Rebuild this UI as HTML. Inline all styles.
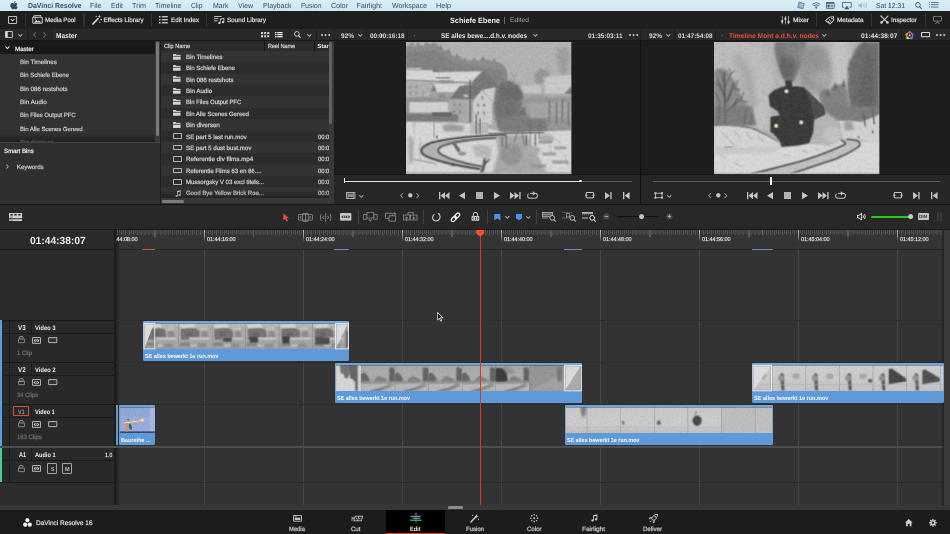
<!DOCTYPE html>
<html><head><meta charset="utf-8"><style>
*{box-sizing:border-box;margin:0;padding:0}
html,body{width:950px;height:534px;overflow:hidden;background:#282828;font-family:"Liberation Sans",sans-serif;color:#d8d8d8}
#o{position:absolute;left:0;top:0;width:1900px;height:1068px;transform:scale(.5);transform-origin:0 0;will-change:transform;overflow:hidden}
#i{position:absolute;left:0;top:0;width:950px;height:534px;transform:scale(2);transform-origin:0 0;overflow:hidden;background:#282828}
.a{position:absolute}
.t{position:absolute;white-space:nowrap;font-weight:bold;transform-origin:0 50%;text-rendering:geometricPrecision}
.sep{position:absolute;width:1px;background:#3e3e3e}
svg{position:absolute;overflow:visible}
</style></head><body>
<div id="o"><div id="i">
<div class="a" style="left:0px;top:0px;width:950px;height:11.2px;background:linear-gradient(180deg,#dceef7,#d1e7f2);"></div>
<svg style="left:10px;top:1px" width="8" height="9" viewBox="0 0 8 9"><path d="M5.6 0.1c.1.9-.7 1.8-1.6 1.8-.1-.9.7-1.700 1.6-1.800zM4 2.400c.5 0 1-.4 1.700-.4.600 0 1.300.300 1.700 1-1.300.800-1.100 2.600.300 3.100-.300.900-1.100 2.200-1.900 2.200-.600 0-.800-.350-1.500-.350s-1 .350-1.500.350C1.800 8.300.300 6.100.300 4.400.300 2.800 1.300 2 2.300 2c.700 0 1.200.400 1.700.400z" fill="#275068"/></svg>
<span class="t" style="left:27.50px;top:2.0px;font-size:7.20px;line-height:7.20px;color:#275068;transform:scaleX(0.9586);">DaVinci Resolve</span>
<span class="t" style="left:90.00px;top:2.0px;font-size:7.20px;line-height:7.20px;color:#275068;font-weight:normal;transform:scaleX(0.9919);">File</span>
<span class="t" style="left:110.50px;top:2.0px;font-size:7.20px;line-height:7.20px;color:#275068;font-weight:normal;transform:scaleX(0.9685);">Edit</span>
<span class="t" style="left:132.00px;top:2.0px;font-size:7.20px;line-height:7.20px;color:#275068;font-weight:normal;transform:scaleX(0.9922);">Trim</span>
<span class="t" style="left:155.00px;top:2.0px;font-size:7.20px;line-height:7.20px;color:#275068;font-weight:normal;transform:scaleX(0.9849);">Timeline</span>
<span class="t" style="left:191.00px;top:2.0px;font-size:7.20px;line-height:7.20px;color:#275068;font-weight:normal;transform:scaleX(0.9281);">Clip</span>
<span class="t" style="left:212.50px;top:2.0px;font-size:7.20px;line-height:7.20px;color:#275068;font-weight:normal;transform:scaleX(0.9697);">Mark</span>
<span class="t" style="left:237.50px;top:2.0px;font-size:7.20px;line-height:7.20px;color:#275068;font-weight:normal;transform:scaleX(0.9707);">View</span>
<span class="t" style="left:262.50px;top:2.0px;font-size:7.20px;line-height:7.20px;color:#275068;font-weight:normal;transform:scaleX(0.9770);">Playback</span>
<span class="t" style="left:300.50px;top:2.0px;font-size:7.20px;line-height:7.20px;color:#275068;font-weight:normal;transform:scaleX(0.9500);">Fusion</span>
<span class="t" style="left:331.00px;top:2.0px;font-size:7.20px;line-height:7.20px;color:#275068;font-weight:normal;transform:scaleX(0.9891);">Color</span>
<span class="t" style="left:356.50px;top:2.0px;font-size:7.20px;line-height:7.20px;color:#275068;font-weight:normal;">Fairlight</span>
<span class="t" style="left:391.50px;top:2.0px;font-size:7.20px;line-height:7.20px;color:#275068;font-weight:normal;transform:scaleX(0.9769);">Workspace</span>
<span class="t" style="left:435.50px;top:2.0px;font-size:7.20px;line-height:7.20px;color:#275068;font-weight:normal;transform:scaleX(1.0137);">Help</span>
<span class="t" style="left:875.50px;top:2.0px;font-size:7.20px;line-height:7.20px;color:#275068;font-weight:normal;transform:scaleX(0.9421);">Sat 12:31</span>
<div class="a" style="left:0px;top:11.2px;width:950px;height:17.4px;background:#1e1e1e;"></div>
<span class="t" style="left:45.00px;top:18.0px;font-size:6.30px;line-height:6.30px;color:#d8d8d8;font-weight:normal;-webkit-text-stroke:0.3px #d8d8d8;transform:scaleX(0.9678);">Media Pool</span>
<span class="t" style="left:103.50px;top:18.0px;font-size:6.30px;line-height:6.30px;color:#d8d8d8;font-weight:normal;-webkit-text-stroke:0.3px #d8d8d8;">Effects Library</span>
<span class="t" style="left:171.00px;top:18.0px;font-size:6.30px;line-height:6.30px;color:#d8d8d8;font-weight:normal;-webkit-text-stroke:0.3px #d8d8d8;">Edit Index</span>
<span class="t" style="left:226.50px;top:18.0px;font-size:6.30px;line-height:6.30px;color:#d8d8d8;font-weight:normal;-webkit-text-stroke:0.3px #d8d8d8;transform:scaleX(0.9944);">Sound Library</span>
<span class="t" style="left:793.00px;top:18.0px;font-size:6.30px;line-height:6.30px;color:#d8d8d8;font-weight:normal;-webkit-text-stroke:0.3px #d8d8d8;transform:scaleX(1.0385);">Mixer</span>
<span class="t" style="left:837.00px;top:18.0px;font-size:6.30px;line-height:6.30px;color:#d8d8d8;font-weight:normal;-webkit-text-stroke:0.3px #d8d8d8;transform:scaleX(1.0089);">Metadata</span>
<span class="t" style="left:891.00px;top:18.0px;font-size:6.30px;line-height:6.30px;color:#d8d8d8;font-weight:normal;-webkit-text-stroke:0.3px #d8d8d8;">Inspector</span>
<span class="t" style="left:449.50px;top:16.5px;font-size:7.60px;line-height:7.60px;color:#f2f2f2;transform:scaleX(0.9630);">Schiefe Ebene</span>
<span class="t" style="left:509.50px;top:18.0px;font-size:6.60px;line-height:6.60px;color:#a6a6a6;font-weight:normal;transform:scaleX(1.0159);">Edited</span>
<div class="a" style="left:24.5px;top:13px;width:1.3px;height:14px;background:#343434;"></div>
<div class="a" style="left:83.3px;top:13px;width:1.3px;height:14px;background:#343434;"></div>
<div class="a" style="left:151px;top:13px;width:1.3px;height:14px;background:#343434;"></div>
<div class="a" style="left:206px;top:13px;width:1.3px;height:14px;background:#343434;"></div>
<div class="a" style="left:816px;top:13px;width:1.3px;height:14px;background:#343434;"></div>
<div class="a" style="left:871px;top:13px;width:1.3px;height:14px;background:#343434;"></div>
<div class="a" style="left:925px;top:13px;width:1.3px;height:14px;background:#343434;"></div>
<div class="a" style="left:504px;top:17px;width:1px;height:7px;background:#6a6a6a;"></div>
<div class="a" style="left:0px;top:28.6px;width:950px;height:11.5px;background:#292929;"></div>
<div class="a" style="left:0px;top:40.1px;width:950px;height:1.2px;background:#161616;"></div>
<span class="t" style="left:56.20px;top:32.5px;font-size:7.00px;line-height:7.00px;color:#ededed;transform:scaleX(0.9345);">Master</span>
<span class="t" style="left:341.00px;top:33.5px;font-size:6.60px;line-height:6.60px;color:#dcdcdc;transform:scaleX(0.9846);">92%</span>
<span class="t" style="left:369.50px;top:33.5px;font-size:6.60px;line-height:6.60px;color:#dcdcdc;transform:scaleX(0.9600);">00:00:16:18</span>
<span class="t" style="left:441.00px;top:33.5px;font-size:6.80px;line-height:6.80px;color:#e6e6e6;transform:scaleX(0.9381);">SE alles bewe....d.h.v. nodes</span>
<span class="t" style="left:588.00px;top:33.5px;font-size:6.60px;line-height:6.60px;color:#dcdcdc;transform:scaleX(0.9701);">01:35:03:11</span>
<span class="t" style="left:649.00px;top:33.5px;font-size:6.60px;line-height:6.60px;color:#dcdcdc;transform:scaleX(0.9846);">92%</span>
<span class="t" style="left:677.50px;top:33.5px;font-size:6.60px;line-height:6.60px;color:#dcdcdc;transform:scaleX(0.9600);">01:47:54:08</span>
<span class="t" style="left:729.00px;top:33.5px;font-size:6.80px;line-height:6.80px;color:#e8503e;transform:scaleX(0.9753);">Timeline Mont a.d.h.v. nodes</span>
<span class="t" style="left:861.00px;top:33.5px;font-size:6.60px;line-height:6.60px;color:#e6e6e6;transform:scaleX(1.0157);">01:44:38:07</span>
<div class="a" style="left:27.6px;top:28.6px;width:24px;height:11.5px;background:#252525;"></div>
<div class="a" style="left:27.2px;top:28.6px;width:1px;height:11.5px;background:#1f1f1f;"></div>
<div class="a" style="left:51.2px;top:28.6px;width:1px;height:11.5px;background:#1f1f1f;"></div>
<div class="a" style="left:288.6px;top:28.6px;width:1px;height:11.5px;background:#1f1f1f;"></div>
<div class="a" style="left:316px;top:28.6px;width:1px;height:11.5px;background:#1f1f1f;"></div>
<div class="a" style="left:333.5px;top:28.6px;width:1px;height:11.5px;background:#1f1f1f;"></div>
<div class="a" style="left:366px;top:28.6px;width:1px;height:11.5px;background:#1f1f1f;"></div>
<div class="a" style="left:407.2px;top:28.6px;width:1px;height:11.5px;background:#1f1f1f;"></div>
<div class="a" style="left:640px;top:28.6px;width:1px;height:11.5px;background:#1f1f1f;"></div>
<div class="a" style="left:674px;top:28.6px;width:1px;height:11.5px;background:#1f1f1f;"></div>
<div class="a" style="left:715.2px;top:28.6px;width:1px;height:11.5px;background:#1f1f1f;"></div>
<div class="a" style="left:900.5px;top:28.6px;width:1px;height:11.5px;background:#1f1f1f;"></div>
<div class="a" style="left:0px;top:41px;width:156px;height:101px;background:#323232;"></div>
<div class="a" style="left:0px;top:41px;width:156px;height:13px;background:#191919;"></div>
<span class="t" style="left:14.70px;top:46.5px;font-size:6.20px;line-height:6.20px;color:#e8e8e8;font-weight:normal;-webkit-text-stroke:0.3px #e8e8e8;transform:scaleX(0.9883);">Master</span>
<span class="t" style="left:20.30px;top:60.0px;font-size:6.10px;line-height:6.10px;color:#c6c6c6;font-weight:normal;-webkit-text-stroke:0.3px #c6c6c6;transform:scaleX(1.0152);">Bin Timelines</span>
<span class="t" style="left:20.30px;top:73.0px;font-size:6.10px;line-height:6.10px;color:#c6c6c6;font-weight:normal;-webkit-text-stroke:0.3px #c6c6c6;transform:scaleX(0.9753);">Bin Schiefe Ebene</span>
<span class="t" style="left:20.30px;top:86.5px;font-size:6.10px;line-height:6.10px;color:#c6c6c6;font-weight:normal;-webkit-text-stroke:0.3px #c6c6c6;transform:scaleX(1.0107);">Bin 086 restshots</span>
<span class="t" style="left:20.30px;top:100.0px;font-size:6.10px;line-height:6.10px;color:#c6c6c6;font-weight:normal;-webkit-text-stroke:0.3px #c6c6c6;transform:scaleX(1.0408);">Bin Audio</span>
<span class="t" style="left:20.30px;top:113.0px;font-size:6.10px;line-height:6.10px;color:#c6c6c6;font-weight:normal;-webkit-text-stroke:0.3px #c6c6c6;transform:scaleX(0.9732);">Bin Files Output PFC</span>
<span class="t" style="left:20.30px;top:126.5px;font-size:6.10px;line-height:6.10px;color:#c6c6c6;font-weight:normal;-webkit-text-stroke:0.3px #c6c6c6;transform:scaleX(0.9740);">Bin Alle Scenes Gereed</span>
<div class="a" style="left:0;top:136px;width:156px;height:6px;overflow:hidden"><span class="t" style="left:20.30px;top:3.5px;font-size:6.10px;line-height:6.10px;color:#8a8a8a;transform:scaleX(0.9240);">Bin diversen</span></div>
<div class="a" style="left:0px;top:133px;width:155px;height:9px;background:linear-gradient(180deg,rgba(0,0,0,0),rgba(0,0,0,.38));"></div>
<div class="a" style="left:155px;top:41px;width:5.3px;height:101px;background:#3a3a3a;"></div>
<div class="a" style="left:156px;top:41.5px;width:3.4px;height:94px;background:#7a7a7a;border-radius:1.7px"></div>
<div class="a" style="left:0px;top:142px;width:160.5px;height:62px;background:#2f2f2f;"></div>
<div class="a" style="left:0px;top:141.8px;width:160.3px;height:0.9px;background:#454545;"></div>
<div class="a" style="left:160.3px;top:41px;width:1px;height:163px;background:#1e1e1e;"></div>
<span class="t" style="left:4.00px;top:149.0px;font-size:6.20px;line-height:6.20px;color:#e8e8e8;font-weight:normal;-webkit-text-stroke:0.3px #e8e8e8;transform:scaleX(0.9846);">Smart Bins</span>
<span class="t" style="left:16.90px;top:164.5px;font-size:6.10px;line-height:6.10px;color:#c6c6c6;font-weight:normal;-webkit-text-stroke:0.3px #c6c6c6;">Keywords</span>
<div class="a" style="left:160.5px;top:41px;width:172px;height:163px;background:#262626;"></div>
<div class="a" style="left:160.5px;top:41px;width:169px;height:10px;background:#2a2a2a;"></div>
<span class="t" style="left:163.60px;top:44.5px;font-size:5.90px;line-height:5.90px;color:#d0d0d0;font-weight:normal;-webkit-text-stroke:0.3px #d0d0d0;transform:scaleX(0.9491);">Clip Name</span>
<span class="t" style="left:267.80px;top:44.5px;font-size:5.90px;line-height:5.90px;color:#d0d0d0;font-weight:normal;-webkit-text-stroke:0.3px #d0d0d0;transform:scaleX(0.9196);">Reel Name</span>
<span class="t" style="left:317.40px;top:44.5px;font-size:5.90px;line-height:5.90px;color:#f4f4f4;">Star</span>
<div class="a" style="left:264px;top:41px;width:1px;height:10px;background:#161616;"></div>
<div class="a" style="left:314px;top:41px;width:1px;height:10px;background:#161616;"></div>
<div class="a" style="left:160.5px;top:51px;width:169px;height:11.37px;background:#333333;"></div>
<span class="t" style="left:185.70px;top:54.5px;font-size:6.10px;line-height:6.10px;color:#cccccc;font-weight:normal;-webkit-text-stroke:0.3px #cccccc;transform:scaleX(1.0097);">Bin Timelines</span>
<svg style="left:173.4px;top:53.60px" width="7.6" height="5.8" viewBox="0 0 7.6 5.8"><path d="M0 .6Q0 0 .6 0H2.800L3.500.900H7Q7.600.900 7.600 1.500V5.200Q7.600 5.800 7 5.800H.6Q0 5.800 0 5.200Z" fill="#d4d4d4"/><rect x="0" y="1.900" width="7.600" height=".7" fill="#2c2c2c"/></svg>
<div class="a" style="left:160.5px;top:62.37px;width:169px;height:11.37px;background:#2c2c2c;"></div>
<span class="t" style="left:185.70px;top:66.0px;font-size:6.10px;line-height:6.10px;color:#cccccc;font-weight:normal;-webkit-text-stroke:0.3px #cccccc;transform:scaleX(0.9753);">Bin Schiefe Ebene</span>
<svg style="left:173.4px;top:64.97px" width="7.6" height="5.8" viewBox="0 0 7.6 5.8"><path d="M0 .6Q0 0 .6 0H2.800L3.500.900H7Q7.600.900 7.600 1.500V5.200Q7.600 5.800 7 5.800H.6Q0 5.800 0 5.200Z" fill="#d4d4d4"/><rect x="0" y="1.900" width="7.600" height=".7" fill="#2c2c2c"/></svg>
<div class="a" style="left:160.5px;top:73.74px;width:169px;height:11.37px;background:#333333;"></div>
<span class="t" style="left:185.70px;top:77.5px;font-size:6.10px;line-height:6.10px;color:#cccccc;font-weight:normal;-webkit-text-stroke:0.3px #cccccc;transform:scaleX(1.0065);">Bin 086 restshots</span>
<svg style="left:173.4px;top:76.34px" width="7.6" height="5.8" viewBox="0 0 7.6 5.8"><path d="M0 .6Q0 0 .6 0H2.800L3.500.900H7Q7.600.900 7.600 1.500V5.200Q7.600 5.800 7 5.800H.6Q0 5.800 0 5.200Z" fill="#d4d4d4"/><rect x="0" y="1.900" width="7.600" height=".7" fill="#2c2c2c"/></svg>
<div class="a" style="left:160.5px;top:85.11px;width:169px;height:11.37px;background:#2c2c2c;"></div>
<span class="t" style="left:185.70px;top:89.0px;font-size:6.10px;line-height:6.10px;color:#cccccc;font-weight:normal;-webkit-text-stroke:0.3px #cccccc;transform:scaleX(1.0175);">Bin Audio</span>
<svg style="left:173.4px;top:87.71px" width="7.6" height="5.8" viewBox="0 0 7.6 5.8"><path d="M0 .6Q0 0 .6 0H2.800L3.500.900H7Q7.600.900 7.600 1.500V5.200Q7.600 5.800 7 5.800H.6Q0 5.800 0 5.200Z" fill="#d4d4d4"/><rect x="0" y="1.900" width="7.600" height=".7" fill="#2c2c2c"/></svg>
<div class="a" style="left:160.5px;top:96.48px;width:169px;height:11.37px;background:#333333;"></div>
<span class="t" style="left:185.70px;top:100.0px;font-size:6.10px;line-height:6.10px;color:#cccccc;font-weight:normal;-webkit-text-stroke:0.3px #cccccc;transform:scaleX(0.9645);">Bin Files Output PFC</span>
<svg style="left:173.4px;top:99.08px" width="7.6" height="5.8" viewBox="0 0 7.6 5.8"><path d="M0 .6Q0 0 .6 0H2.800L3.500.900H7Q7.600.900 7.600 1.500V5.200Q7.600 5.800 7 5.800H.6Q0 5.800 0 5.200Z" fill="#d4d4d4"/><rect x="0" y="1.900" width="7.600" height=".7" fill="#2c2c2c"/></svg>
<div class="a" style="left:160.5px;top:107.85px;width:169px;height:11.37px;background:#2c2c2c;"></div>
<span class="t" style="left:185.70px;top:111.5px;font-size:6.10px;line-height:6.10px;color:#cccccc;font-weight:normal;-webkit-text-stroke:0.3px #cccccc;transform:scaleX(0.9771);">Bin Alle Scenes Gereed</span>
<svg style="left:173.4px;top:110.45px" width="7.6" height="5.8" viewBox="0 0 7.6 5.8"><path d="M0 .6Q0 0 .6 0H2.800L3.500.900H7Q7.600.900 7.600 1.500V5.200Q7.600 5.800 7 5.800H.6Q0 5.800 0 5.200Z" fill="#d4d4d4"/><rect x="0" y="1.900" width="7.600" height=".7" fill="#2c2c2c"/></svg>
<div class="a" style="left:160.5px;top:119.22px;width:169px;height:11.37px;background:#333333;"></div>
<span class="t" style="left:185.70px;top:123.0px;font-size:6.10px;line-height:6.10px;color:#cccccc;font-weight:normal;-webkit-text-stroke:0.3px #cccccc;transform:scaleX(1.0075);">Bin diversen</span>
<svg style="left:173.4px;top:121.82px" width="7.6" height="5.8" viewBox="0 0 7.6 5.8"><path d="M0 .6Q0 0 .6 0H2.800L3.500.900H7Q7.600.900 7.600 1.500V5.200Q7.600 5.800 7 5.800H.6Q0 5.800 0 5.200Z" fill="#d4d4d4"/><rect x="0" y="1.900" width="7.600" height=".7" fill="#2c2c2c"/></svg>
<div class="a" style="left:160.5px;top:130.59px;width:169px;height:11.37px;background:#2c2c2c;"></div>
<span class="t" style="left:185.70px;top:134.5px;font-size:6.10px;line-height:6.10px;color:#cccccc;font-weight:normal;-webkit-text-stroke:0.3px #cccccc;transform:scaleX(1.0067);">SE part 5 last run.mov</span>
<div class="a" style="left:173.4px;top:133.49px;width:8.6px;height:5.6px;border:1px solid #b4b4b4;border-radius:.8px"></div>
<span class="t" style="left:318.00px;top:134.5px;font-size:6.10px;line-height:6.10px;color:#cccccc;font-weight:normal;-webkit-text-stroke:0.3px #cccccc;transform:scaleX(0.9508);">00:00</span>
<div class="a" style="left:160.5px;top:141.96px;width:169px;height:11.37px;background:#333333;"></div>
<span class="t" style="left:185.70px;top:145.5px;font-size:6.10px;line-height:6.10px;color:#cccccc;font-weight:normal;-webkit-text-stroke:0.3px #cccccc;transform:scaleX(1.0054);">SE part 5 dust bust.mov</span>
<div class="a" style="left:173.4px;top:144.86px;width:8.6px;height:5.6px;border:1px solid #b4b4b4;border-radius:.8px"></div>
<span class="t" style="left:318.00px;top:145.5px;font-size:6.10px;line-height:6.10px;color:#cccccc;font-weight:normal;-webkit-text-stroke:0.3px #cccccc;transform:scaleX(0.9508);">00:00</span>
<div class="a" style="left:160.5px;top:153.33px;width:169px;height:11.37px;background:#2c2c2c;"></div>
<span class="t" style="left:185.70px;top:157.0px;font-size:6.10px;line-height:6.10px;color:#cccccc;font-weight:normal;-webkit-text-stroke:0.3px #cccccc;transform:scaleX(1.0294);">Referentie div films.mp4</span>
<div class="a" style="left:173.4px;top:156.23px;width:8.6px;height:5.6px;border:1px solid #b4b4b4;border-radius:.8px"></div>
<span class="t" style="left:318.00px;top:157.0px;font-size:6.10px;line-height:6.10px;color:#cccccc;font-weight:normal;-webkit-text-stroke:0.3px #cccccc;transform:scaleX(0.9508);">00:00</span>
<div class="a" style="left:160.5px;top:164.7px;width:169px;height:11.37px;background:#333333;"></div>
<span class="t" style="left:185.70px;top:168.5px;font-size:6.10px;line-height:6.10px;color:#cccccc;font-weight:normal;-webkit-text-stroke:0.3px #cccccc;transform:scaleX(0.9863);">Referentie Films 63 en 86....</span>
<div class="a" style="left:173.4px;top:167.60px;width:8.6px;height:5.6px;border:1px solid #b4b4b4;border-radius:.8px"></div>
<span class="t" style="left:318.00px;top:168.5px;font-size:6.10px;line-height:6.10px;color:#cccccc;font-weight:normal;-webkit-text-stroke:0.3px #cccccc;transform:scaleX(0.9508);">00:00</span>
<div class="a" style="left:160.5px;top:176.07px;width:169px;height:11.37px;background:#2c2c2c;"></div>
<span class="t" style="left:185.70px;top:180.0px;font-size:6.10px;line-height:6.10px;color:#cccccc;font-weight:normal;-webkit-text-stroke:0.3px #cccccc;transform:scaleX(0.9914);">Mussorgsky V 03 excl titels...</span>
<div class="a" style="left:173.4px;top:178.97px;width:8.6px;height:5.6px;border:1px solid #b4b4b4;border-radius:.8px"></div>
<span class="t" style="left:318.00px;top:180.0px;font-size:6.10px;line-height:6.10px;color:#cccccc;font-weight:normal;-webkit-text-stroke:0.3px #cccccc;transform:scaleX(0.9508);">00:00</span>
<div class="a" style="left:160.5px;top:187.44px;width:169px;height:11.37px;background:#333333;"></div>
<span class="t" style="left:185.70px;top:191.0px;font-size:6.10px;line-height:6.10px;color:#cccccc;font-weight:normal;-webkit-text-stroke:0.3px #cccccc;transform:scaleX(0.9828);">Good Bye Yellow Brick Roa...</span>
<svg style="left:174.5px;top:189.64px" width="6" height="7" viewBox="0 0 6 7"><path d="M2 1.200L5.600.300V5.100A1.100 1 0 1 1 4.900 4.200V1.700L2.700 2.250V6A1.100 1 0 1 1 2 5.100Z" fill="#d4d4d4"/></svg>
<span class="t" style="left:318.00px;top:191.0px;font-size:6.10px;line-height:6.10px;color:#cccccc;font-weight:normal;-webkit-text-stroke:0.3px #cccccc;transform:scaleX(0.9508);">00:00</span>
<div class="a" style="left:161.3px;top:198.3px;width:173px;height:5.6px;background:#383838;"></div>
<div class="a" style="left:161.3px;top:190px;width:167.5px;height:8.3px;background:linear-gradient(180deg,rgba(0,0,0,0),rgba(0,0,0,.3));"></div>
<div class="a" style="left:161.7px;top:199.7px;width:22.3px;height:3px;background:#7c7c7c;border-radius:1.5px"></div>
<div class="a" style="left:328.8px;top:41px;width:5.4px;height:163px;background:#383838;"></div>
<div class="a" style="left:329.4px;top:41.5px;width:2.9px;height:82px;background:#626262;border-radius:1.4px"></div>
<div class="a" style="left:334px;top:41px;width:0.8px;height:163px;background:#1c1c1c;"></div>
<div class="a" style="left:334px;top:41px;width:616px;height:133px;background:#1d1d1d;"></div>
<div class="a" style="left:334px;top:173.9px;width:616px;height:1px;background:#141414;"></div>
<div class="a" style="left:334px;top:174.8px;width:616px;height:29px;background:#262626;"></div>
<div class="a" style="left:640px;top:41px;width:1px;height:163px;background:#111111;"></div>
<div class="a" style="left:0px;top:203.6px;width:950px;height:1.8px;background:#131313;"></div>
<svg style="left:405.8px;top:41.8px" width="165.4" height="132.1" viewBox="0 0 165 131.500" preserveAspectRatio="none"><clipPath id="cl"><rect width="165" height="131.500"/></clipPath><g clip-path="url(#cl)"><rect width="165" height="131.500" fill="#aeaeae"/><rect y="40" width="165" height="50" fill="#a2a2a2" filter="url(#b3)"/><path d="M0 4L4 3 8 5 12 2 17 4 21 1 26 3 30 1 34 5 38 9 42 8 46 13 50 15 54 14 58 19 64 18 70 19 76 17 84 18 92 20 98 23 101 30 101 40 0 40Z" fill="#828282" filter="url(#b1)"/><path d="M0 10L30 8 44 18 60 24 98 28 100 40 0 40Z" fill="#767676" filter="url(#b2)"/><path d="M150 8Q156 2 162 8L164 20 160 33H154L150 20Z" fill="#9b9b9b" filter="url(#b2)"/><path d="M128 32Q134 24 142 30L146 40 142 52H132Z" fill="#8e8e8e" filter="url(#b2)"/><path d="M136.800 34.300L165 33V46L158 51.500 137 52Z" fill="#c6c6c6" filter="url(#b1)"/><path d="M158 51.500L165 44V53Z" fill="#6e6e6e" filter="url(#b1)"/><rect x="137" y="52" width="28" height="22" fill="#aaaaaa" filter="url(#b1)"/><path d="M140 54V74M146 56V74M152 54V74M158 56V74" stroke="#7a7a7a" stroke-width="1.400" filter="url(#b1)"/><path d="M114 43L136 42V52L118 52Z" fill="#c2c2c2" filter="url(#b2)"/><path d="M118 52H138V70H118Z" fill="#9a9a9a" filter="url(#b2)"/><path d="M0 28L28 28 31 30 76 29 66 40 0 37.500Z" fill="#d6d6d6" filter="url(#b1)"/><path d="M0 26L14 25.500 16 28H0Z" fill="#bdbdbd" filter="url(#b1)"/><path d="M26 27L31 27 32 30H27Z" fill="#6a6a6a" filter="url(#b1)"/><path d="M30 35H44V36.400H30Z" fill="#707070" filter="url(#b1)"/><path d="M0 38L32 40V54L0 55Z" fill="#acacac" filter="url(#b1)"/><path d="M3 43H5.500V46H3ZM9 43H11.500V46H9ZM3 49H5.500V52H3ZM9 49H11.500V52H9ZM16 49H18V52H16Z" fill="#8c8c8c" filter="url(#b1)"/><rect x="33" y="38" width="14" height="3" fill="#888" filter="url(#b1)"/><path d="M66 40L77.500 28.500 91 40V52H66Z" fill="#6b6b6b" filter="url(#b1)"/><path d="M27.600 41.400H60L51 50H24Z" fill="#d6d6d6" filter="url(#b1)"/><path d="M24 50L27.600 41.400 31 50Z" fill="#707070" filter="url(#b1)"/><path d="M24 50H46V57H24Z" fill="#9a9a9a" filter="url(#b1)"/><rect x="33" y="52" width="6" height="4" fill="#7e7e7e" filter="url(#b1)"/><path d="M43 57L54 43.500 66 43 74 47 67 59Z" fill="#6a6a6a" filter="url(#b1)"/><path d="M57 52L62 52.500 62 55 58 55Z" fill="#bdbdbd" filter="url(#b1)"/><path d="M43 57H67V80H43Z" fill="#a2a2a2" filter="url(#b1)"/><path d="M47 61H49V64H47ZM53 61H55V64H53ZM47 68H49V71H47ZM53 68H55V71H53Z" fill="#7c7c7c" filter="url(#b1)"/><path d="M67 59L76 47.500 86 60V82H67Z" fill="#cacaca" filter="url(#b1)"/><path d="M76 47.500L90 45 98 56 87 60Z" fill="#cacaca" filter="url(#b1)"/><path d="M71 61H73V64.500H71ZM77 61H79V64.500H77ZM71 69H73V72.500H71ZM77 69H79V72.500H77ZM75 54H77V57H75Z" fill="#858585" filter="url(#b1)"/><path d="M0 55H43V60H0Z" fill="#8a8a8a" filter="url(#b1)"/><path d="M3 60H42V70H3Z" fill="#d0d0d0" filter="url(#b1)"/><path d="M0 58H3V82H0Z" fill="#8a8a8a" filter="url(#b1)"/><path d="M0 71L52 72V79L0 79Z" fill="#6e6e6e" filter="url(#b1)"/><path d="M26 70H46V74H26Z" fill="#555" filter="url(#b1)"/><rect x="63.200" y="37.500" width="1.500" height="55" fill="#4f4f4f" filter="url(#b1)"/><path d="M59 34L63.500 38" stroke="#c8c8c8" stroke-width="1" filter="url(#b1)"/><path d="M90 42Q98 36 107 40Q117 46 117 56Q118 70 113 84L92 86Q86 70 88 56Z" fill="#6c6c6c" filter="url(#b2)"/><ellipse cx="101" cy="62" rx="10" ry="16" fill="#646464" filter="url(#b2)"/><path d="M116 56L165 54V90H114Z" fill="#8c8c8c" filter="url(#b2)"/><path d="M95 74H141V90H92Z" fill="#707070" filter="url(#b2)"/><path d="M120 60H165V76H124Z" fill="#9c9c9c" filter="url(#b2)"/><path d="M143 58V80M150 60V82M156 58V80M162 60V84" stroke="#6a6a6a" stroke-width="1.600" filter="url(#b1)"/><path d="M0 79.500L64 81 100 91 165 88V131.500H0Z" fill="#d5d5d5" filter="url(#b1)"/><path d="M36 83Q46 80 58 84L57 89 38 89Z" fill="#959595" filter="url(#b2)"/><path d="M64 80H82V91H64Z" fill="#b4b4b4" filter="url(#b1)"/><path d="M70 72V92M74 76V92" stroke="#4a4a4a" stroke-width="1.200" filter="url(#b1)"/><rect x="27.500" y="78" width=".9" height="18" fill="#7a7a7a" filter="url(#b1)"/><rect x="30" y="93" width="1.600" height="3" fill="#444" filter="url(#b1)"/><path d="M82 91.500L138 90" stroke="#505050" stroke-width="1.500" filter="url(#b1)"/><path d="M90 94L120 92 132 114 141 131.500H86L92 110Z" fill="#a2a2a2" filter="url(#b2)"/><ellipse cx="105" cy="112" rx="11" ry="11" fill="#8a8a8a" filter="url(#b2)"/><path d="M96 94V104M100 93V106M120 93V103M129 92V104" stroke="#555" stroke-width="1.300" filter="url(#b1)"/><ellipse cx="140" cy="96" rx="8" ry="4" fill="#a8a8a8" filter="url(#b2)"/><ellipse cx="128" cy="108" rx="6" ry="4" fill="#a6a6a6" filter="url(#b2)"/><path d="M86 93.500Q50 95 26 100.500Q12 106 18 112Q30 119 72 126L74 123.500Q44 117 38 112Q30 108 36 104Q50 99 86 96Z" fill="#adadad" filter="url(#b1)"/><path d="M100 92.500Q50 94 25 100.500Q10 106 18 112.500Q32 120 74 126.500" fill="none" stroke="#3c3c3c" stroke-width="2.400" filter="url(#b1)"/><path d="M98 93.600Q52 95 27.500 101.500Q14 106.500 21 111.800Q34 118.500 74 125" fill="none" stroke="#b0b0b0" stroke-width=".8"/><path d="M90 95.500Q52 97.500 36 103.500Q28 108 36 112.500Q48 119 76 124" fill="none" stroke="#474747" stroke-width="1.800" filter="url(#b1)"/><path d="M46 100.500L49 100 54.500 108 52 110Z" fill="#505050" filter="url(#b1)"/><ellipse cx="56" cy="111" rx="4" ry="2" fill="#8a8a8a" filter="url(#b1)"/><path d="M77 116L80 115 79.500 119 83 116 84 117.500 79.500 122 77 131.500H73.500L76.500 121Z" fill="#505050" filter="url(#b1)"/><path d="M66 104Q76 100 86 106L84 116 70 114Z" fill="#b2b2b2" filter="url(#b2)"/><path d="M2 96Q6 90 8 100L7 120 3 122Z" fill="#a8a8a8" filter="url(#b2)"/><rect x="45" y="121" width="3.600" height="2.400" fill="#444" filter="url(#b1)"/><path d="M8 117L30 121" stroke="#8e8e8e" stroke-width="1.200" filter="url(#b1)"/><rect x="0" y="129.500" width="165" height="2" fill="#a6a6a6" filter="url(#b1)"/><g fill="none" stroke="#8a8a8a" stroke-width=".7" filter="url(#b1)" opacity=".9"><path d="M157 33V12M157 22L152 12M157 20L162 10M157 16L154 8M157 14L160 5M152 16L149 12M162 16L164 12"/><path d="M138 52V30M138 40L132 30M138 38L144 28M138 34L134 26M138 32L142 24M133 36L130 32"/><path d="M108 40V32M108 36L105 31M108 35L111 30"/></g><g fill="none" stroke="#5a5a5a" stroke-width=".8" filter="url(#b1)"><path d="M124 78V100M133 76V96M124 86L120 80M133 84L137 78M112 86L108 100M116 88L118 104"/></g><g fill="#5c5c5c" filter="url(#b1)" opacity=".8"><path d="M92 48L96 40 99 46 103 38 107 45 111 42 114 50 117 56 112 58 96 56Z"/><path d="M88 70L92 62 95 68H88Z"/><path d="M112 72L118 64 120 74Z"/></g><g fill="#777" filter="url(#b1)"><path d="M4 3L6 0 8 4ZM10 2.500L12.500 0 14 3ZM18 2L20.500 0 22 2.500ZM25 2L27.500 0 30 3ZM33 6L35 2 37 8ZM41 9L43 6 45 12ZM49 15L51 11 53 16ZM57 19L58.500 15 61 19ZM66 19L68 15 70 19ZM75 18L77 14 79 18ZM86 19L88 16 90 20Z"/></g><g fill="none" stroke="#9a9a9a" stroke-width=".6" filter="url(#b1)"><path d="M8 78V92M6 84L10 80M14 96V118M12 104L17 100M150 96L156 106M142 100L146 112M158 112L162 124M120 118L128 126M100 120L96 130"/></g><g fill="#8a8a8a" filter="url(#b1)" opacity=".8"><path d="M132 98H146V101H132ZM148 104H160V107H148ZM136 110H150V113H136ZM146 118H162V121H146ZM126 122H140V125H126Z"/></g><rect width="165" height="131.500" filter="url(#gr)" opacity=".07"/><rect width="165" height="131.500" filter="url(#gr2)" opacity=".06"/></g></svg>
<svg style="left:713.8px;top:41.8px" width="165.4" height="132.1" viewBox="0 0 165 131.500" preserveAspectRatio="none"><clipPath id="cr"><rect width="165" height="131.500"/></clipPath><g clip-path="url(#cr)"><rect width="165" height="131.500" fill="#adadad"/><ellipse cx="22" cy="14" rx="34" ry="20" fill="#b7b7b7" filter="url(#b5)"/><ellipse cx="126" cy="20" rx="11" ry="28" fill="#c0c0c0" filter="url(#b3)"/><ellipse cx="100" cy="26" rx="17" ry="24" fill="#909090" filter="url(#b3)"/><ellipse cx="108" cy="36" rx="8" ry="8" fill="#a2a2a2" filter="url(#b3)"/><path d="M24 10Q40 30 46 64L36 66Q34 36 18 18Z" fill="#a2a2a2" filter="url(#b3)"/><ellipse cx="50" cy="44" rx="10" ry="24" fill="#bababa" filter="url(#b3)"/><ellipse cx="47" cy="76" rx="9" ry="14" fill="#bebebe" filter="url(#b3)"/><path d="M71 39Q62 24 60 6L62 0H92Q90 18 80 39Z" fill="#6c6c6c" filter="url(#b2)"/><ellipse cx="73" cy="22" rx="7.500" ry="15" fill="#585858" filter="url(#b2)"/><ellipse cx="80" cy="8" rx="12" ry="9" fill="#787878" filter="url(#b3)"/><ellipse cx="98" cy="16" rx="12" ry="12" fill="#8a8a8a" filter="url(#b3)"/><path d="M0 30Q4 24 8 27Q14 26 18 36Q24 42 26 52Q32 60 36 70L42 82H0Z" fill="#808080" filter="url(#b2)"/><path d="M10 30L12 82M4 40L11 56M20 40L13 60M24 56L16 70M30 66L22 82" stroke="#4e4e4e" stroke-width="1.600" fill="none" filter="url(#b1)"/><path d="M0 64H38L42 83H0Z" fill="#6f6f6f" filter="url(#b2)"/><path d="M148 0H165V74L150 78 138 74Q132 50 134 34Q132 22 138 14Q142 4 148 0Z" fill="#626262" filter="url(#b2)"/><path d="M152 6Q160 10 160 30Q162 50 158 70L146 72Q140 40 152 6Z" fill="#545454" filter="url(#b3)"/><path d="M105 50Q110 44 116 48Q120 40 125 43Q129 38 133 50L136 78H108Z" fill="#777777" filter="url(#b2)"/><path d="M109 64H165V72L147 80 125 77Z" fill="#6f6f6f" filter="url(#b2)"/><path d="M125 78.400L147.500 79.700 165 72V102L146 97 128 97Z" fill="#cfcfcf" filter="url(#b1)"/><path d="M149 70L151 84M158 66L160 82" stroke="#505050" stroke-width="1.400" filter="url(#b1)"/><path d="M130 80Q134 76 138 80L140 88H130Z" fill="#9a9a9a" filter="url(#b2)"/><path d="M0 102L66 103 96 101 128 97 165 100V131.500H0Z" fill="#d7d7d7" filter="url(#b1)"/><path d="M0 104L70 104 60 110 0 112Z" fill="#c6c6c6" filter="url(#b2)"/><path d="M0 83.700L16 83 37 86.300 54 94 63.500 99.400 66 103.500 10 104.600 0 102Z" fill="#d2d2d2" filter="url(#b1)"/><path d="M0 83Q18 81 38 85.500L52 92" fill="none" stroke="#707070" stroke-width="1.700" filter="url(#b1)"/><path d="M10 104.300L19 104.600" stroke="#505050" stroke-width="1.100" filter="url(#b1)"/><path d="M52 92L64 99" stroke="#7a7a7a" stroke-width="1.400" filter="url(#b1)"/><path d="M99 72L112 70 125 79.700 127 96.800 115 103.500 96 101Z" fill="#b0b0b0" filter="url(#b2)"/><ellipse cx="118" cy="92" rx="9" ry="8" fill="#c0c0c0" filter="url(#b2)"/><path d="M37 131.500L84 119Q110 111.500 130.500 102Q132 99.500 126.600 97.800L132 97Q142 98 146 102Q144 106 121 116.500L84 129.600 78 131.500Z" fill="#bebebe" filter="url(#b1)"/><path d="M37 131.500L84 119.500Q112 111 130.500 102Q132.500 99.600 126.600 97.800" fill="none" stroke="#3c3c3c" stroke-width="1.700" filter="url(#b1)"/><path d="M76 131.500L121.300 116.400Q140 108 145 103.500Q147 100 142 98.300Q138 97 132 97" fill="none" stroke="#404040" stroke-width="1.700" filter="url(#b1)"/><path d="M54.400 52.800L60.400 47.700 66.800 45 71.200 44 71.200 38.200 78 38.200 78 44 84 44 89.600 45 98.500 54 108.700 64 110.800 72 100 77 99 90 95 100.700 84 103 67.500 104.600 66 99.400 60 92 56.300 89.500 56.300 74.500 65.500 73 63.500 69 55.700 64Z" fill="#282828" filter="url(#b1)"/><path d="M89.600 45L98.500 54 108.700 64 110.800 72 100 77 96 58Z" fill="#3c3c3c" filter="url(#b1)"/><path d="M58 74.500H96V77H58Z" fill="#222222" filter="url(#b1)"/><circle cx="72.300" cy="49" r="1.900" fill="#f6f2c8" filter="url(#b1)"/><circle cx="62" cy="83.400" r="1.900" fill="#f6f2c8" filter="url(#b1)"/><circle cx="87" cy="80" r="1.900" fill="#f6f2c8" filter="url(#b1)"/><rect x="0" y="130" width="165" height="1.500" fill="#b0b0b0" filter="url(#b1)"/><g fill="none" stroke="#4a4a4a" stroke-width=".8" filter="url(#b1)"><path d="M11 82L10 30M10 50L3 36M10 46L17 32M10 40L6 28M10.500 60L20 46M20 46L24 38M20 46L26 48M11 70L26 58M26 58L30 50M26 58L34 60M4 82L6 60M6 60L1 50M30 82L32 66M36 82L38 72M3 44L0 40M17 32L15 26M17 32L21 28"/></g><g fill="#5a5a5a" filter="url(#b1)" opacity=".85"><path d="M146 6L150 0H153L149 10ZM140 16L146 8 147 18ZM136 28L142 18 144 30ZM134 42L140 32 142 44ZM136 56L141 46 143 58Z"/><path d="M118 48L121 40 124 48ZM127 44L129.500 37 132 45ZM110 54L113 47 116 54Z"/></g><g fill="none" stroke="#9a9a9a" stroke-width=".7" filter="url(#b1)"><path d="M8 90L14 96M20 88L26 95M32 90L38 97M44 94L50 100M16 98L20 103M70 112L76 114M88 108L94 110M100 106L104 108M20 120L28 124M6 112L12 116"/></g><rect x="143.500" y="93.800" width="1.600" height="1.600" fill="#333" filter="url(#b1)"/><rect x="157.500" y="88" width="1.500" height="3" fill="#444" filter="url(#b1)"/><rect width="165" height="131.500" filter="url(#gr)" opacity=".07"/><rect width="165" height="131.500" filter="url(#gr2)" opacity=".06"/></g></svg>
<div class="a" style="left:344px;top:180.6px;width:236px;height:1px;background:#e0e0e0;"></div>
<div class="a" style="left:580px;top:180.6px;width:52px;height:1px;background:#5a5a5a;"></div>
<div class="a" style="left:343.6px;top:178.4px;width:1.2px;height:5px;background:#f0f0f0;"></div>
<div class="a" style="left:579px;top:179.6px;width:2.6px;height:2.6px;background:#f0f0f0;border-radius:50%"></div>
<div class="a" style="left:653px;top:180.6px;width:287px;height:1px;background:#5a5a5a;"></div>
<div class="a" style="left:770.3px;top:177.2px;width:1.6px;height:7.4px;background:#f4f4f4;"></div>
<svg style="left:346.00px;top:192.20px" width="9.40" height="6.90" viewBox="0 0 9.40 6.90"><rect x=".45" y=".45" width="8.500" height="6" rx=".6" fill="none" stroke="#c4c4c4" stroke-width=".9"/><rect x="2.300" y="1.700" width="4.800" height="3.500" fill="#8a8a8a"/><path d="M2 .5V6.400M7.400.500V6.400" stroke="#c4c4c4" stroke-width=".6"/></svg><svg style="left:359.20px;top:194.60px" width="4.60" height="2.60" viewBox="0 0 4.60 2.60"><path d="M.3.300L2.30 2.30 4.30 .3" fill="none" stroke="#b8b8b8" stroke-width="0.85"/></svg><svg style="left:399.80px;top:193.00px" width="3.40" height="5.40" viewBox="0 0 3.40 5.40"><path d="M3 .3L.6 2.700 3 5.100" fill="none" stroke="#9a9a9a" stroke-width=".85"/></svg><svg style="left:407.70px;top:193.40px" width="4.60" height="4.60" viewBox="0 0 4.60 4.60"><circle cx="2.300" cy="2.300" r="2.200" fill="#c4c4c4"/></svg><svg style="left:416.30px;top:193.00px" width="3.40" height="5.40" viewBox="0 0 3.40 5.40"><path d="M.4.300L2.800 2.700.4 5.100" fill="none" stroke="#9a9a9a" stroke-width=".85"/></svg><svg style="left:438.50px;top:192.00px" width="10.60" height="7.20" viewBox="0 0 10.60 7.20"><rect x="0" y="0" width="1.300" height="7.200" fill="#c4c4c4"/><path d="M6 0V7.200L1.500 3.600Z M10.500 0V7.200L6 3.600Z" fill="#c4c4c4"/></svg><svg style="left:458.70px;top:192.00px" width="6.00" height="7.20" viewBox="0 0 6.00 7.20"><path d="M6 0V7.200L0 3.600Z" fill="#c4c4c4"/></svg><div class="a" style="left:475.6px;top:191.9px;width:7.6px;height:7.6px;background:#b2b2b2;"></div><svg style="left:494.30px;top:192.00px" width="6.00" height="7.20" viewBox="0 0 6.00 7.20"><path d="M0 0V7.200L6 3.600Z" fill="#c4c4c4"/></svg><svg style="left:510.00px;top:192.00px" width="10.60" height="7.20" viewBox="0 0 10.60 7.20"><rect x="9.300" y="0" width="1.300" height="7.200" fill="#c4c4c4"/><path d="M0 0V7.200L4.500 3.600Z M4.500 0V7.200L9 3.600Z" fill="#c4c4c4"/></svg><svg style="left:527.00px;top:191.20px" width="11.00" height="8.20" viewBox="0 0 11.00 8.20"><path d="M3 2.400H8.200Q10.400 2.400 10.400 4.800Q10.400 7.200 8.200 7.200H2.800Q.6 7.200 .6 4.800Q.6 3.400 1.700 2.800" fill="none" stroke="#c4c4c4" stroke-width="1"/><path d="M5.800 0L8.400 2.400 5.800 4.800Z" fill="#c4c4c4"/></svg><svg style="left:584.70px;top:192.40px" width="9.80" height="6.40" viewBox="0 0 9.80 6.40"><rect x="1.200" y=".5" width="7.400" height="5.400" rx="1" fill="none" stroke="#c4c4c4" stroke-width="1"/><path d="M0 3.200H2.400M7.400 3.200H9.800" stroke="#c4c4c4" stroke-width="1"/></svg><svg style="left:604.60px;top:192.00px" width="6.60" height="7.20" viewBox="0 0 6.60 7.20"><rect x="5.300" y="0" width="1.300" height="7.200" fill="#c4c4c4"/><path d="M0 0V7.200L5 3.600Z" fill="#c4c4c4"/></svg><svg style="left:622.60px;top:192.00px" width="6.60" height="7.20" viewBox="0 0 6.60 7.20"><rect x="0" y="0" width="1.300" height="7.200" fill="#c4c4c4"/><path d="M6.600 0V7.200L1.600 3.600Z" fill="#c4c4c4"/></svg><svg style="left:654.00px;top:192.20px" width="9.40" height="6.90" viewBox="0 0 9.40 6.90"><rect x="1.400" y="1.200" width="6.600" height="4.500" fill="none" stroke="#c4c4c4" stroke-width=".8"/><rect x=".4" y=".2" width="2" height="2" fill="#c4c4c4"/><rect x="7" y=".2" width="2" height="2" fill="#c4c4c4"/><rect x=".4" y="4.700" width="2" height="2" fill="#c4c4c4"/><rect x="7" y="4.700" width="2" height="2" fill="#c4c4c4"/></svg><svg style="left:667.20px;top:194.60px" width="4.60" height="2.60" viewBox="0 0 4.60 2.60"><path d="M.3.300L2.30 2.30 4.30 .3" fill="none" stroke="#b8b8b8" stroke-width="0.85"/></svg><svg style="left:707.80px;top:193.00px" width="3.40" height="5.40" viewBox="0 0 3.40 5.40"><path d="M3 .3L.6 2.700 3 5.100" fill="none" stroke="#9a9a9a" stroke-width=".85"/></svg><svg style="left:715.70px;top:193.40px" width="4.60" height="4.60" viewBox="0 0 4.60 4.60"><circle cx="2.300" cy="2.300" r="2.200" fill="#c4c4c4"/></svg><svg style="left:724.30px;top:193.00px" width="3.40" height="5.40" viewBox="0 0 3.40 5.40"><path d="M.4.300L2.800 2.700.4 5.100" fill="none" stroke="#9a9a9a" stroke-width=".85"/></svg><svg style="left:746.50px;top:192.00px" width="10.60" height="7.20" viewBox="0 0 10.60 7.20"><rect x="0" y="0" width="1.300" height="7.200" fill="#c4c4c4"/><path d="M6 0V7.200L1.500 3.600Z M10.500 0V7.200L6 3.600Z" fill="#c4c4c4"/></svg><svg style="left:766.70px;top:192.00px" width="6.00" height="7.20" viewBox="0 0 6.00 7.20"><path d="M6 0V7.200L0 3.600Z" fill="#c4c4c4"/></svg><div class="a" style="left:783.6px;top:191.9px;width:7.6px;height:7.6px;background:#b2b2b2;"></div><svg style="left:802.30px;top:192.00px" width="6.00" height="7.20" viewBox="0 0 6.00 7.20"><path d="M0 0V7.200L6 3.600Z" fill="#c4c4c4"/></svg><svg style="left:818.00px;top:192.00px" width="10.60" height="7.20" viewBox="0 0 10.60 7.20"><rect x="9.300" y="0" width="1.300" height="7.200" fill="#c4c4c4"/><path d="M0 0V7.200L4.500 3.600Z M4.500 0V7.200L9 3.600Z" fill="#c4c4c4"/></svg><svg style="left:835.00px;top:191.20px" width="11.00" height="8.20" viewBox="0 0 11.00 8.20"><path d="M3 2.400H8.200Q10.400 2.400 10.400 4.800Q10.400 7.200 8.200 7.200H2.800Q.6 7.200 .6 4.800Q.6 3.400 1.700 2.800" fill="none" stroke="#c4c4c4" stroke-width="1"/><path d="M5.800 0L8.400 2.400 5.800 4.800Z" fill="#c4c4c4"/></svg><svg style="left:892.70px;top:192.40px" width="9.80" height="6.40" viewBox="0 0 9.80 6.40"><rect x="1.200" y=".5" width="7.400" height="5.400" rx="1" fill="none" stroke="#c4c4c4" stroke-width="1"/><path d="M0 3.200H2.400M7.400 3.200H9.800" stroke="#c4c4c4" stroke-width="1"/></svg><svg style="left:912.60px;top:192.00px" width="6.60" height="7.20" viewBox="0 0 6.60 7.20"><rect x="5.300" y="0" width="1.300" height="7.200" fill="#c4c4c4"/><path d="M0 0V7.200L5 3.600Z" fill="#c4c4c4"/></svg><svg style="left:930.60px;top:192.00px" width="6.60" height="7.20" viewBox="0 0 6.60 7.20"><rect x="0" y="0" width="1.300" height="7.200" fill="#c4c4c4"/><path d="M6.600 0V7.200L1.600 3.600Z" fill="#c4c4c4"/></svg>
<div class="a" style="left:0px;top:205.4px;width:950px;height:23.4px;background:#282828;"></div>
<svg style="left:8.70px;top:212.90px" width="13.10" height="8.00" viewBox="0 0 13.10 8.00"><rect x="0" y="0" width="13.100" height="5.300" rx=".6" fill="#cfcfcf"/><rect x="1.400" y=".9" width="2.400" height="1.700" fill="#3a3a3a"/><rect x="5.300" y=".9" width="2.400" height="1.700" fill="#3a3a3a"/><rect x="9.200" y=".9" width="2.400" height="1.700" fill="#3a3a3a"/><rect x="0" y="6.300" width="13.100" height="1.700" rx=".4" fill="#cfcfcf"/><rect x=".8" y="3.500" width="3" height="1.100" fill="#8a8a8a"/><rect x=".8" y="6.700" width="3" height=".9" fill="#8a8a8a"/></svg><svg style="left:282.60px;top:212.60px" width="6.40" height="8.80" viewBox="0 0 6.40 8.80"><path d="M.3.300V7.400L2.200 5.700 3.500 8.600 4.900 8 3.600 5.200H6.100Z" fill="#e8503a"/></svg><svg style="left:298.20px;top:212.60px" width="14.80" height="8.70" viewBox="0 0 14.80 8.70"><rect x="4.600" y=".4" width="5.600" height="7.900" rx=".8" fill="none" stroke="#8c8c8c" stroke-width=".8"/><rect x=".4" y="1.600" width="14" height="5.500" rx=".8" fill="none" stroke="#8c8c8c" stroke-width=".8"/><path d="M7.400.400V8.300" stroke="#8c8c8c" stroke-width=".8"/><path d="M3.400 3L2 4.350 3.400 5.700M11.400 3L12.800 4.350 11.400 5.700" fill="none" stroke="#8c8c8c" stroke-width=".8"/></svg><svg style="left:319.00px;top:212.60px" width="13.40" height="8.70" viewBox="0 0 13.40 8.70"><path d="M2.400.800Q.4 4.350 2.400 7.900M11 .8Q13 4.350 11 7.900" fill="none" stroke="#8c8c8c" stroke-width=".8"/><path d="M6.700 0V8.700" stroke="#8c8c8c" stroke-width=".9"/><path d="M5 2.900L3.600 4.350 5 5.800M8.400 2.900L9.800 4.350 8.400 5.800" fill="none" stroke="#8c8c8c" stroke-width=".8"/></svg><svg style="left:339.80px;top:213.40px" width="11.40" height="7.60" viewBox="0 0 11.40 7.60"><path d="M1 0H10.400Q11.400 0 11.400 1V6.600Q11.400 7.600 10.400 7.600H1Q0 7.600 0 6.600V1Q0 0 1 0Z" fill="#c6c6c6"/><rect x="1.500" y="2.700" width="8.400" height="2.200" rx="1" fill="#2a2a2a"/><circle cx="3.600" cy="3.800" r=".8" fill="#c6c6c6"/><circle cx="7.800" cy="3.800" r=".8" fill="#c6c6c6"/><rect x="5.300" y="2.700" width=".8" height="2.200" fill="#c6c6c6"/></svg><div class="a" style="left:357.6px;top:210px;width:1px;height:14px;background:#404040;"></div><svg style="left:363.40px;top:212.40px" width="14.60" height="9.40" viewBox="0 0 14.60 9.40"><rect x="3.800" y=".4" width="7" height="5.600" rx=".6" fill="none" stroke="#8c8c8c" stroke-width=".8"/><rect x=".4" y="2.600" width="3.400" height="4.600" fill="none" stroke="#8c8c8c" stroke-width=".8"/><rect x="10.800" y="2.600" width="3.400" height="4.600" fill="none" stroke="#8c8c8c" stroke-width=".8"/><path d="M5.800 7.200L7.300 8.900 8.800 7.200" fill="none" stroke="#8c8c8c" stroke-width=".8"/></svg><svg style="left:385.00px;top:212.00px" width="11.40" height="9.80" viewBox="0 0 11.40 9.80"><rect x=".4" y="1.200" width="6.800" height="5.400" rx=".6" fill="none" stroke="#8c8c8c" stroke-width=".8"/><rect x="4" y="3.800" width="6.600" height="5.400" rx=".6" fill="#282828" stroke="#8c8c8c" stroke-width=".8"/><path d="M8 1.400H10.400V3M9.300.300L10.500 1.400 9.300 2.500" fill="none" stroke="#8c8c8c" stroke-width=".7"/></svg><svg style="left:403.00px;top:212.20px" width="14.40" height="9.60" viewBox="0 0 14.40 9.60"><rect x="5" y=".4" width="5.200" height="4" fill="none" stroke="#8c8c8c" stroke-width=".8"/><rect x=".4" y="3" width="6.400" height="5" fill="#282828" stroke="#8c8c8c" stroke-width=".8"/><rect x="7.600" y="3" width="6.400" height="5" fill="#282828" stroke="#8c8c8c" stroke-width=".8"/><path d="M3.600 9.400V5.200M2.300 6.400L3.600 5 4.900 6.400M10.800 3.800V6.800M9.500 5.700L10.800 7 12.100 5.700" fill="none" stroke="#8c8c8c" stroke-width=".8"/></svg><div class="a" style="left:422.6px;top:210px;width:1px;height:14px;background:#404040;"></div><svg style="left:431.50px;top:212.60px" width="9.20" height="8.60" viewBox="0 0 9.20 8.60"><path d="M6.800.700Q8.900 3 7.600 5.800Q6 8.400 3.200 7.900Q.6 7.100 .6 4.400Q.7 2.600 2 1.700" fill="none" stroke="#c8c8c8" stroke-width="1.100" stroke-linecap="round"/><path d="M5.900.900L7.600.300" stroke="#c8c8c8" stroke-width=".9"/></svg><svg style="left:451.20px;top:212.60px" width="9.00" height="8.60" viewBox="0 0 9.00 8.60"><g transform="rotate(-45 4.500 4.300)" fill="none" stroke="#f2f2f2" stroke-width="1.300"><rect x="-.8" y="2.600" width="6" height="3.400" rx="1.700"/><rect x="3.800" y="2.600" width="6" height="3.400" rx="1.700"/></g></svg><svg style="left:470.50px;top:212.00px" width="8.80" height="9.20" viewBox="0 0 8.80 9.20"><path d="M2.300 4V2.600Q2.300.500 4.400.500Q6.500.500 6.500 2.600V4" fill="none" stroke="#cfcfcf" stroke-width=".9"/><rect x=".5" y="4" width="7.800" height="4.800" rx=".8" fill="#cfcfcf"/><path d="M2.600 5.300L1.700 6.400 2.600 7.500M6.200 5.300L7.100 6.400 6.200 7.500" fill="none" stroke="#282828" stroke-width=".7"/><rect x="4" y="5" width=".8" height="2.800" fill="#282828"/></svg><div class="a" style="left:487.1px;top:210px;width:1px;height:14px;background:#404040;"></div><svg style="left:494.00px;top:214.20px" width="6.60" height="6.60" viewBox="0 0 6.60 6.60"><path d="M.2 0H6.400V6.400L3.300 4.400 .2 6.400Z" fill="#4b93f2"/></svg><svg style="left:504.60px;top:216.00px" width="4.60" height="2.60" viewBox="0 0 4.60 2.60"><path d="M.3.300L2.30 2.30 4.30 .3" fill="none" stroke="#c0c0c0" stroke-width="0.85"/></svg><svg style="left:516.00px;top:214.20px" width="6.00" height="6.60" viewBox="0 0 6.00 6.60"><path d="M.6 0H5.400Q6 0 6 .6V4.200L3 6.400 0 4.200V.600Q0 0 .6 0Z" fill="#4b93f2"/></svg><svg style="left:526.20px;top:216.00px" width="4.60" height="2.60" viewBox="0 0 4.60 2.60"><path d="M.3.300L2.30 2.30 4.30 .3" fill="none" stroke="#c0c0c0" stroke-width="0.85"/></svg><div class="a" style="left:536px;top:210px;width:1px;height:14px;background:#404040;"></div><svg style="left:542.00px;top:212.00px" width="14.20" height="9.80" viewBox="0 0 14.20 9.80"><rect x=".4" y=".4" width="10.200" height="4.400" fill="#5e5e5e" stroke="#b4b4b4" stroke-width=".8"/><path d="M1.600 2.600H9.400" stroke="#b4b4b4" stroke-width=".7" stroke-dasharray="1.200 .8"/><rect x="0" y="5.700" width="6" height=".8" fill="#8a8a8a"/><circle cx="10.200" cy="5.900" r="2.300" fill="#282828" stroke="#c4c4c4" stroke-width=".9"/><path d="M11.900 7.700L13.700 9.500" stroke="#c4c4c4" stroke-width="1"/></svg><svg style="left:562.00px;top:212.00px" width="14.20" height="9.80" viewBox="0 0 14.20 9.80"><path d="M0 .6H10.500" stroke="#6a6a6a" stroke-width=".9" stroke-dasharray="1.500 .8"/><rect x="4.400" y="1.600" width="3" height="3.400" fill="none" stroke="#b4b4b4" stroke-width=".7"/><rect x="0" y="5.700" width="5.600" height=".8" fill="#7a7a7a"/><circle cx="10.200" cy="5.900" r="2.300" fill="#282828" stroke="#c4c4c4" stroke-width=".9"/><path d="M11.900 7.700L13.700 9.500" stroke="#c4c4c4" stroke-width="1"/></svg><svg style="left:582.00px;top:212.00px" width="14.20" height="9.80" viewBox="0 0 14.20 9.80"><rect x="0" y="0" width="11" height="1.800" fill="#b8b8b8"/><path d="M0 2.800H11" stroke="#8a8a8a" stroke-width=".8" stroke-dasharray="1.200 .8"/><rect x="0" y="5.500" width="6" height="1" fill="#c8c8c8"/><circle cx="10.200" cy="5.900" r="2.300" fill="#282828" stroke="#e8e8e8" stroke-width=".9"/><path d="M11.900 7.700L13.700 9.500" stroke="#e8e8e8" stroke-width="1"/></svg><svg style="left:603.40px;top:213.20px" width="6.80" height="6.80" viewBox="0 0 6.80 6.80"><circle cx="3.400" cy="3.400" r="3.300" fill="#454545"/><rect x="1.700" y="2.950" width="3.400" height=".9" fill="#b8b8b8"/></svg><div class="a" style="left:617px;top:216.2px;width:41.5px;height:1px;background:#111111;"></div><svg style="left:639.20px;top:214.00px" width="5.20" height="5.20" viewBox="0 0 5.20 5.20"><circle cx="2.600" cy="2.600" r="2.500" fill="#c4c4c4"/></svg><svg style="left:665.60px;top:213.20px" width="6.80" height="6.80" viewBox="0 0 6.80 6.80"><circle cx="3.400" cy="3.400" r="3.300" fill="#454545"/><rect x="1.700" y="2.950" width="3.400" height=".9" fill="#b8b8b8"/><rect x="2.950" y="1.700" width=".9" height="3.400" fill="#b8b8b8"/></svg><svg style="left:856.80px;top:213.20px" width="9.80" height="7.20" viewBox="0 0 9.80 7.20"><path d="M.4 2.300H1.900L4.600.300V6.900L1.900 4.900H.4Z" fill="none" stroke="#f0f0f0" stroke-width=".8" stroke-linejoin="round"/><path d="M6 2.300Q6.900 3.600 6 4.900M7.400 1.200Q9 3.600 7.400 6" fill="none" stroke="#f0f0f0" stroke-width=".8"/></svg><div class="a" style="left:870.6px;top:215.6px;width:40px;height:2.8px;background:#141414;border-radius:1.4px"></div><div class="a" style="left:871px;top:216px;width:39.2px;height:2px;background:#25cc18;border-radius:1px"></div><svg style="left:908.00px;top:214.40px" width="5.20" height="5.20" viewBox="0 0 5.20 5.20"><circle cx="2.600" cy="2.600" r="2.500" fill="#cacaca"/></svg><div class="a" style="left:917.8px;top:213.2px;width:11.3px;height:6.8px;background:#c2c2c2;border-radius:.8px"></div><span class="t" style="left:919.30px;top:215.0px;font-size:4.60px;line-height:4.60px;color:#3a3a3a;transform:scaleX(0.9855);">DIM</span><div class="a" style="left:936.7px;top:212.6px;width:2.2px;height:8.6px;background:#3a3a3a;"></div><div class="a" style="left:939.9px;top:212.6px;width:2.2px;height:8.6px;background:#3a3a3a;"></div>
<div class="a" style="left:0px;top:228.8px;width:950px;height:0.8px;background:#191919;"></div>
<div class="a" style="left:116px;top:229.5px;width:834px;height:281px;background:#333333;"></div>
<div class="a" style="left:116px;top:229.5px;width:834px;height:19.5px;background:#343434;"></div>
<div class="a" style="left:0px;top:229.5px;width:114.2px;height:281px;background:#2c2c2c;"></div>
<div class="a" style="left:0px;top:229.5px;width:114.2px;height:19.3px;background:#2a2a2a;"></div>
<div class="a" style="left:0px;top:248.8px;width:114.2px;height:1px;background:#161616;"></div>
<div class="a" style="left:0px;top:249.8px;width:114.2px;height:70.6px;background:#2a2a2a;"></div>
<div class="a" style="left:114.2px;top:229.5px;width:1.6px;height:281px;background:#1c1c1c;"></div>
<div class="a" style="left:115.8px;top:229.5px;width:4px;height:275px;background:linear-gradient(90deg,rgba(24,24,26,.7),rgba(24,24,26,0));"></div>
<span class="t" style="left:29.50px;top:236.5px;font-size:10.30px;line-height:10.30px;color:#f0f0f0;transform:scaleX(0.9927);">01:44:38:07</span>
<svg style="left:116px;top:229.8px" width="834" height="10" viewBox="0 0 834 10"><rect x="1.05" y="0" width="0.65" height="5.0" fill="#6c6c6c"/><rect x="3.03" y="0" width="0.65" height="3.6" fill="#646464"/><rect x="5.02" y="0" width="0.65" height="5.0" fill="#6c6c6c"/><rect x="6.99" y="0" width="0.65" height="3.6" fill="#646464"/><rect x="8.97" y="0" width="0.65" height="5.0" fill="#6c6c6c"/><rect x="10.96" y="0" width="0.65" height="3.6" fill="#646464"/><rect x="12.93" y="0" width="0.65" height="5.0" fill="#6c6c6c"/><rect x="14.92" y="0" width="0.65" height="3.6" fill="#646464"/><rect x="16.89" y="0" width="0.65" height="5.0" fill="#6c6c6c"/><rect x="18.87" y="0" width="0.65" height="3.6" fill="#646464"/><rect x="20.86" y="0" width="0.65" height="5.0" fill="#6c6c6c"/><rect x="22.83" y="0" width="0.65" height="3.6" fill="#646464"/><rect x="24.81" y="0" width="0.65" height="5.0" fill="#6c6c6c"/><rect x="26.80" y="0" width="0.65" height="3.6" fill="#646464"/><rect x="28.77" y="0" width="0.65" height="5.0" fill="#6c6c6c"/><rect x="30.75" y="0" width="0.65" height="3.6" fill="#646464"/><rect x="32.73" y="0" width="0.65" height="5.0" fill="#6c6c6c"/><rect x="34.71" y="0" width="0.65" height="3.6" fill="#646464"/><rect x="36.69" y="0" width="0.65" height="5.0" fill="#6c6c6c"/><rect x="38.60" y="0" width="0.80" height="7.2" fill="#8e8e8e"/><rect x="40.65" y="0" width="0.65" height="5.0" fill="#6c6c6c"/><rect x="42.64" y="0" width="0.65" height="3.6" fill="#646464"/><rect x="44.61" y="0" width="0.65" height="5.0" fill="#6c6c6c"/><rect x="46.60" y="0" width="0.65" height="3.6" fill="#646464"/><rect x="48.58" y="0" width="0.65" height="5.0" fill="#6c6c6c"/><rect x="50.55" y="0" width="0.65" height="3.6" fill="#646464"/><rect x="52.54" y="0" width="0.65" height="5.0" fill="#6c6c6c"/><rect x="54.52" y="0" width="0.65" height="3.6" fill="#646464"/><rect x="56.49" y="0" width="0.65" height="5.0" fill="#6c6c6c"/><rect x="58.48" y="0" width="0.65" height="3.6" fill="#646464"/><rect x="60.45" y="0" width="0.65" height="5.0" fill="#6c6c6c"/><rect x="62.43" y="0" width="0.65" height="3.6" fill="#646464"/><rect x="64.42" y="0" width="0.65" height="5.0" fill="#6c6c6c"/><rect x="66.39" y="0" width="0.65" height="3.6" fill="#646464"/><rect x="68.37" y="0" width="0.65" height="5.0" fill="#6c6c6c"/><rect x="70.36" y="0" width="0.65" height="3.6" fill="#646464"/><rect x="72.33" y="0" width="0.65" height="5.0" fill="#6c6c6c"/><rect x="74.31" y="0" width="0.65" height="3.6" fill="#646464"/><rect x="76.30" y="0" width="0.65" height="5.0" fill="#6c6c6c"/><rect x="78.27" y="0" width="0.65" height="3.6" fill="#646464"/><rect x="80.25" y="0" width="0.65" height="5.0" fill="#6c6c6c"/><rect x="82.23" y="0" width="0.65" height="3.6" fill="#646464"/><rect x="84.21" y="0" width="0.65" height="5.0" fill="#6c6c6c"/><rect x="86.19" y="0" width="0.65" height="3.6" fill="#646464"/><rect x="90.16" y="0" width="0.65" height="3.6" fill="#646464"/><rect x="92.13" y="0" width="0.65" height="5.0" fill="#6c6c6c"/><rect x="94.11" y="0" width="0.65" height="3.6" fill="#646464"/><rect x="96.10" y="0" width="0.65" height="5.0" fill="#6c6c6c"/><rect x="98.08" y="0" width="0.65" height="3.6" fill="#646464"/><rect x="100.05" y="0" width="0.65" height="5.0" fill="#6c6c6c"/><rect x="102.04" y="0" width="0.65" height="3.6" fill="#646464"/><rect x="104.02" y="0" width="0.65" height="5.0" fill="#6c6c6c"/><rect x="105.99" y="0" width="0.65" height="3.6" fill="#646464"/><rect x="107.98" y="0" width="0.65" height="5.0" fill="#6c6c6c"/><rect x="109.95" y="0" width="0.65" height="3.6" fill="#646464"/><rect x="111.93" y="0" width="0.65" height="5.0" fill="#6c6c6c"/><rect x="113.92" y="0" width="0.65" height="3.6" fill="#646464"/><rect x="115.89" y="0" width="0.65" height="5.0" fill="#6c6c6c"/><rect x="117.87" y="0" width="0.65" height="3.6" fill="#646464"/><rect x="119.86" y="0" width="0.65" height="5.0" fill="#6c6c6c"/><rect x="121.83" y="0" width="0.65" height="3.6" fill="#646464"/><rect x="123.81" y="0" width="0.65" height="5.0" fill="#6c6c6c"/><rect x="125.80" y="0" width="0.65" height="3.6" fill="#646464"/><rect x="127.77" y="0" width="0.65" height="5.0" fill="#6c6c6c"/><rect x="129.76" y="0" width="0.65" height="3.6" fill="#646464"/><rect x="131.74" y="0" width="0.65" height="5.0" fill="#6c6c6c"/><rect x="133.72" y="0" width="0.65" height="3.6" fill="#646464"/><rect x="135.70" y="0" width="0.65" height="5.0" fill="#6c6c6c"/><rect x="137.60" y="0" width="0.80" height="7.2" fill="#8e8e8e"/><rect x="139.66" y="0" width="0.65" height="5.0" fill="#6c6c6c"/><rect x="141.64" y="0" width="0.65" height="3.6" fill="#646464"/><rect x="143.62" y="0" width="0.65" height="5.0" fill="#6c6c6c"/><rect x="145.59" y="0" width="0.65" height="3.6" fill="#646464"/><rect x="147.57" y="0" width="0.65" height="5.0" fill="#6c6c6c"/><rect x="149.56" y="0" width="0.65" height="3.6" fill="#646464"/><rect x="151.54" y="0" width="0.65" height="5.0" fill="#6c6c6c"/><rect x="153.52" y="0" width="0.65" height="3.6" fill="#646464"/><rect x="155.50" y="0" width="0.65" height="5.0" fill="#6c6c6c"/><rect x="157.48" y="0" width="0.65" height="3.6" fill="#646464"/><rect x="159.45" y="0" width="0.65" height="5.0" fill="#6c6c6c"/><rect x="161.44" y="0" width="0.65" height="3.6" fill="#646464"/><rect x="163.42" y="0" width="0.65" height="5.0" fill="#6c6c6c"/><rect x="165.40" y="0" width="0.65" height="3.6" fill="#646464"/><rect x="167.38" y="0" width="0.65" height="5.0" fill="#6c6c6c"/><rect x="169.36" y="0" width="0.65" height="3.6" fill="#646464"/><rect x="171.33" y="0" width="0.65" height="5.0" fill="#6c6c6c"/><rect x="173.31" y="0" width="0.65" height="3.6" fill="#646464"/><rect x="175.30" y="0" width="0.65" height="5.0" fill="#6c6c6c"/><rect x="177.28" y="0" width="0.65" height="3.6" fill="#646464"/><rect x="179.25" y="0" width="0.65" height="5.0" fill="#6c6c6c"/><rect x="181.24" y="0" width="0.65" height="3.6" fill="#646464"/><rect x="183.21" y="0" width="0.65" height="5.0" fill="#6c6c6c"/><rect x="185.19" y="0" width="0.65" height="3.6" fill="#646464"/><rect x="189.16" y="0" width="0.65" height="3.6" fill="#646464"/><rect x="191.14" y="0" width="0.65" height="5.0" fill="#6c6c6c"/><rect x="193.12" y="0" width="0.65" height="3.6" fill="#646464"/><rect x="195.09" y="0" width="0.65" height="5.0" fill="#6c6c6c"/><rect x="197.07" y="0" width="0.65" height="3.6" fill="#646464"/><rect x="199.06" y="0" width="0.65" height="5.0" fill="#6c6c6c"/><rect x="201.04" y="0" width="0.65" height="3.6" fill="#646464"/><rect x="203.02" y="0" width="0.65" height="5.0" fill="#6c6c6c"/><rect x="205.00" y="0" width="0.65" height="3.6" fill="#646464"/><rect x="206.98" y="0" width="0.65" height="5.0" fill="#6c6c6c"/><rect x="208.95" y="0" width="0.65" height="3.6" fill="#646464"/><rect x="210.94" y="0" width="0.65" height="5.0" fill="#6c6c6c"/><rect x="212.92" y="0" width="0.65" height="3.6" fill="#646464"/><rect x="214.90" y="0" width="0.65" height="5.0" fill="#6c6c6c"/><rect x="216.88" y="0" width="0.65" height="3.6" fill="#646464"/><rect x="218.86" y="0" width="0.65" height="5.0" fill="#6c6c6c"/><rect x="220.83" y="0" width="0.65" height="3.6" fill="#646464"/><rect x="222.81" y="0" width="0.65" height="5.0" fill="#6c6c6c"/><rect x="224.80" y="0" width="0.65" height="3.6" fill="#646464"/><rect x="226.78" y="0" width="0.65" height="5.0" fill="#6c6c6c"/><rect x="228.75" y="0" width="0.65" height="3.6" fill="#646464"/><rect x="230.74" y="0" width="0.65" height="5.0" fill="#6c6c6c"/><rect x="232.71" y="0" width="0.65" height="3.6" fill="#646464"/><rect x="234.69" y="0" width="0.65" height="5.0" fill="#6c6c6c"/><rect x="236.60" y="0" width="0.80" height="7.2" fill="#8e8e8e"/><rect x="238.66" y="0" width="0.65" height="5.0" fill="#6c6c6c"/><rect x="240.64" y="0" width="0.65" height="3.6" fill="#646464"/><rect x="242.62" y="0" width="0.65" height="5.0" fill="#6c6c6c"/><rect x="244.59" y="0" width="0.65" height="3.6" fill="#646464"/><rect x="246.57" y="0" width="0.65" height="5.0" fill="#6c6c6c"/><rect x="248.56" y="0" width="0.65" height="3.6" fill="#646464"/><rect x="250.54" y="0" width="0.65" height="5.0" fill="#6c6c6c"/><rect x="252.51" y="0" width="0.65" height="3.6" fill="#646464"/><rect x="254.50" y="0" width="0.65" height="5.0" fill="#6c6c6c"/><rect x="256.48" y="0" width="0.65" height="3.6" fill="#646464"/><rect x="258.45" y="0" width="0.65" height="5.0" fill="#6c6c6c"/><rect x="260.44" y="0" width="0.65" height="3.6" fill="#646464"/><rect x="262.42" y="0" width="0.65" height="5.0" fill="#6c6c6c"/><rect x="264.39" y="0" width="0.65" height="3.6" fill="#646464"/><rect x="266.38" y="0" width="0.65" height="5.0" fill="#6c6c6c"/><rect x="268.36" y="0" width="0.65" height="3.6" fill="#646464"/><rect x="270.34" y="0" width="0.65" height="5.0" fill="#6c6c6c"/><rect x="272.31" y="0" width="0.65" height="3.6" fill="#646464"/><rect x="274.30" y="0" width="0.65" height="5.0" fill="#6c6c6c"/><rect x="276.28" y="0" width="0.65" height="3.6" fill="#646464"/><rect x="278.25" y="0" width="0.65" height="5.0" fill="#6c6c6c"/><rect x="280.24" y="0" width="0.65" height="3.6" fill="#646464"/><rect x="282.22" y="0" width="0.65" height="5.0" fill="#6c6c6c"/><rect x="284.19" y="0" width="0.65" height="3.6" fill="#646464"/><rect x="288.16" y="0" width="0.65" height="3.6" fill="#646464"/><rect x="290.13" y="0" width="0.65" height="5.0" fill="#6c6c6c"/><rect x="292.12" y="0" width="0.65" height="3.6" fill="#646464"/><rect x="294.10" y="0" width="0.65" height="5.0" fill="#6c6c6c"/><rect x="296.07" y="0" width="0.65" height="3.6" fill="#646464"/><rect x="298.06" y="0" width="0.65" height="5.0" fill="#6c6c6c"/><rect x="300.04" y="0" width="0.65" height="3.6" fill="#646464"/><rect x="302.01" y="0" width="0.65" height="5.0" fill="#6c6c6c"/><rect x="304.00" y="0" width="0.65" height="3.6" fill="#646464"/><rect x="305.98" y="0" width="0.65" height="5.0" fill="#6c6c6c"/><rect x="307.95" y="0" width="0.65" height="3.6" fill="#646464"/><rect x="309.94" y="0" width="0.65" height="5.0" fill="#6c6c6c"/><rect x="311.92" y="0" width="0.65" height="3.6" fill="#646464"/><rect x="313.89" y="0" width="0.65" height="5.0" fill="#6c6c6c"/><rect x="315.88" y="0" width="0.65" height="3.6" fill="#646464"/><rect x="317.86" y="0" width="0.65" height="5.0" fill="#6c6c6c"/><rect x="319.84" y="0" width="0.65" height="3.6" fill="#646464"/><rect x="321.81" y="0" width="0.65" height="5.0" fill="#6c6c6c"/><rect x="323.80" y="0" width="0.65" height="3.6" fill="#646464"/><rect x="325.78" y="0" width="0.65" height="5.0" fill="#6c6c6c"/><rect x="327.75" y="0" width="0.65" height="3.6" fill="#646464"/><rect x="329.74" y="0" width="0.65" height="5.0" fill="#6c6c6c"/><rect x="331.72" y="0" width="0.65" height="3.6" fill="#646464"/><rect x="333.69" y="0" width="0.65" height="5.0" fill="#6c6c6c"/><rect x="335.60" y="0" width="0.80" height="7.2" fill="#8e8e8e"/><rect x="337.66" y="0" width="0.65" height="5.0" fill="#6c6c6c"/><rect x="339.63" y="0" width="0.65" height="3.6" fill="#646464"/><rect x="341.62" y="0" width="0.65" height="5.0" fill="#6c6c6c"/><rect x="343.60" y="0" width="0.65" height="3.6" fill="#646464"/><rect x="345.57" y="0" width="0.65" height="5.0" fill="#6c6c6c"/><rect x="347.56" y="0" width="0.65" height="3.6" fill="#646464"/><rect x="349.54" y="0" width="0.65" height="5.0" fill="#6c6c6c"/><rect x="351.51" y="0" width="0.65" height="3.6" fill="#646464"/><rect x="353.50" y="0" width="0.65" height="5.0" fill="#6c6c6c"/><rect x="355.48" y="0" width="0.65" height="3.6" fill="#646464"/><rect x="357.45" y="0" width="0.65" height="5.0" fill="#6c6c6c"/><rect x="359.44" y="0" width="0.65" height="3.6" fill="#646464"/><rect x="361.42" y="0" width="0.65" height="5.0" fill="#6c6c6c"/><rect x="363.39" y="0" width="0.65" height="3.6" fill="#646464"/><rect x="365.38" y="0" width="0.65" height="5.0" fill="#6c6c6c"/><rect x="367.36" y="0" width="0.65" height="3.6" fill="#646464"/><rect x="369.33" y="0" width="0.65" height="5.0" fill="#6c6c6c"/><rect x="371.31" y="0" width="0.65" height="3.6" fill="#646464"/><rect x="373.30" y="0" width="0.65" height="5.0" fill="#6c6c6c"/><rect x="375.28" y="0" width="0.65" height="3.6" fill="#646464"/><rect x="377.25" y="0" width="0.65" height="5.0" fill="#6c6c6c"/><rect x="379.24" y="0" width="0.65" height="3.6" fill="#646464"/><rect x="381.22" y="0" width="0.65" height="5.0" fill="#6c6c6c"/><rect x="383.19" y="0" width="0.65" height="3.6" fill="#646464"/><rect x="387.16" y="0" width="0.65" height="3.6" fill="#646464"/><rect x="389.13" y="0" width="0.65" height="5.0" fill="#6c6c6c"/><rect x="391.12" y="0" width="0.65" height="3.6" fill="#646464"/><rect x="393.10" y="0" width="0.65" height="5.0" fill="#6c6c6c"/><rect x="395.07" y="0" width="0.65" height="3.6" fill="#646464"/><rect x="397.06" y="0" width="0.65" height="5.0" fill="#6c6c6c"/><rect x="399.04" y="0" width="0.65" height="3.6" fill="#646464"/><rect x="401.01" y="0" width="0.65" height="5.0" fill="#6c6c6c"/><rect x="402.99" y="0" width="0.65" height="3.6" fill="#646464"/><rect x="404.97" y="0" width="0.65" height="5.0" fill="#6c6c6c"/><rect x="406.95" y="0" width="0.65" height="3.6" fill="#646464"/><rect x="408.94" y="0" width="0.65" height="5.0" fill="#6c6c6c"/><rect x="410.92" y="0" width="0.65" height="3.6" fill="#646464"/><rect x="412.90" y="0" width="0.65" height="5.0" fill="#6c6c6c"/><rect x="414.88" y="0" width="0.65" height="3.6" fill="#646464"/><rect x="416.86" y="0" width="0.65" height="5.0" fill="#6c6c6c"/><rect x="418.83" y="0" width="0.65" height="3.6" fill="#646464"/><rect x="420.81" y="0" width="0.65" height="5.0" fill="#6c6c6c"/><rect x="422.80" y="0" width="0.65" height="3.6" fill="#646464"/><rect x="424.78" y="0" width="0.65" height="5.0" fill="#6c6c6c"/><rect x="426.75" y="0" width="0.65" height="3.6" fill="#646464"/><rect x="428.73" y="0" width="0.65" height="5.0" fill="#6c6c6c"/><rect x="430.71" y="0" width="0.65" height="3.6" fill="#646464"/><rect x="432.69" y="0" width="0.65" height="5.0" fill="#6c6c6c"/><rect x="434.60" y="0" width="0.80" height="7.2" fill="#8e8e8e"/><rect x="436.66" y="0" width="0.65" height="5.0" fill="#6c6c6c"/><rect x="438.64" y="0" width="0.65" height="3.6" fill="#646464"/><rect x="440.62" y="0" width="0.65" height="5.0" fill="#6c6c6c"/><rect x="442.60" y="0" width="0.65" height="3.6" fill="#646464"/><rect x="444.57" y="0" width="0.65" height="5.0" fill="#6c6c6c"/><rect x="446.56" y="0" width="0.65" height="3.6" fill="#646464"/><rect x="448.54" y="0" width="0.65" height="5.0" fill="#6c6c6c"/><rect x="450.51" y="0" width="0.65" height="3.6" fill="#646464"/><rect x="452.49" y="0" width="0.65" height="5.0" fill="#6c6c6c"/><rect x="454.47" y="0" width="0.65" height="3.6" fill="#646464"/><rect x="456.45" y="0" width="0.65" height="5.0" fill="#6c6c6c"/><rect x="458.44" y="0" width="0.65" height="3.6" fill="#646464"/><rect x="460.42" y="0" width="0.65" height="5.0" fill="#6c6c6c"/><rect x="462.40" y="0" width="0.65" height="3.6" fill="#646464"/><rect x="464.38" y="0" width="0.65" height="5.0" fill="#6c6c6c"/><rect x="466.36" y="0" width="0.65" height="3.6" fill="#646464"/><rect x="468.33" y="0" width="0.65" height="5.0" fill="#6c6c6c"/><rect x="470.31" y="0" width="0.65" height="3.6" fill="#646464"/><rect x="472.30" y="0" width="0.65" height="5.0" fill="#6c6c6c"/><rect x="474.28" y="0" width="0.65" height="3.6" fill="#646464"/><rect x="476.25" y="0" width="0.65" height="5.0" fill="#6c6c6c"/><rect x="478.23" y="0" width="0.65" height="3.6" fill="#646464"/><rect x="480.21" y="0" width="0.65" height="5.0" fill="#6c6c6c"/><rect x="482.19" y="0" width="0.65" height="3.6" fill="#646464"/><rect x="486.16" y="0" width="0.65" height="3.6" fill="#646464"/><rect x="488.14" y="0" width="0.65" height="5.0" fill="#6c6c6c"/><rect x="490.12" y="0" width="0.65" height="3.6" fill="#646464"/><rect x="492.10" y="0" width="0.65" height="5.0" fill="#6c6c6c"/><rect x="494.07" y="0" width="0.65" height="3.6" fill="#646464"/><rect x="496.06" y="0" width="0.65" height="5.0" fill="#6c6c6c"/><rect x="498.04" y="0" width="0.65" height="3.6" fill="#646464"/><rect x="500.01" y="0" width="0.65" height="5.0" fill="#6c6c6c"/><rect x="502.00" y="0" width="0.65" height="3.6" fill="#646464"/><rect x="503.97" y="0" width="0.65" height="5.0" fill="#6c6c6c"/><rect x="505.95" y="0" width="0.65" height="3.6" fill="#646464"/><rect x="507.94" y="0" width="0.65" height="5.0" fill="#6c6c6c"/><rect x="509.92" y="0" width="0.65" height="3.6" fill="#646464"/><rect x="511.90" y="0" width="0.65" height="5.0" fill="#6c6c6c"/><rect x="513.88" y="0" width="0.65" height="3.6" fill="#646464"/><rect x="515.85" y="0" width="0.65" height="5.0" fill="#6c6c6c"/><rect x="517.83" y="0" width="0.65" height="3.6" fill="#646464"/><rect x="519.81" y="0" width="0.65" height="5.0" fill="#6c6c6c"/><rect x="521.79" y="0" width="0.65" height="3.6" fill="#646464"/><rect x="523.77" y="0" width="0.65" height="5.0" fill="#6c6c6c"/><rect x="525.75" y="0" width="0.65" height="3.6" fill="#646464"/><rect x="527.73" y="0" width="0.65" height="5.0" fill="#6c6c6c"/><rect x="529.71" y="0" width="0.65" height="3.6" fill="#646464"/><rect x="531.69" y="0" width="0.65" height="5.0" fill="#6c6c6c"/><rect x="533.60" y="0" width="0.80" height="7.2" fill="#8e8e8e"/><rect x="535.65" y="0" width="0.65" height="5.0" fill="#6c6c6c"/><rect x="537.63" y="0" width="0.65" height="3.6" fill="#646464"/><rect x="539.61" y="0" width="0.65" height="5.0" fill="#6c6c6c"/><rect x="541.59" y="0" width="0.65" height="3.6" fill="#646464"/><rect x="543.57" y="0" width="0.65" height="5.0" fill="#6c6c6c"/><rect x="545.55" y="0" width="0.65" height="3.6" fill="#646464"/><rect x="547.53" y="0" width="0.65" height="5.0" fill="#6c6c6c"/><rect x="549.51" y="0" width="0.65" height="3.6" fill="#646464"/><rect x="551.50" y="0" width="0.65" height="5.0" fill="#6c6c6c"/><rect x="553.47" y="0" width="0.65" height="3.6" fill="#646464"/><rect x="555.45" y="0" width="0.65" height="5.0" fill="#6c6c6c"/><rect x="557.43" y="0" width="0.65" height="3.6" fill="#646464"/><rect x="559.41" y="0" width="0.65" height="5.0" fill="#6c6c6c"/><rect x="561.39" y="0" width="0.65" height="3.6" fill="#646464"/><rect x="563.38" y="0" width="0.65" height="5.0" fill="#6c6c6c"/><rect x="565.35" y="0" width="0.65" height="3.6" fill="#646464"/><rect x="567.33" y="0" width="0.65" height="5.0" fill="#6c6c6c"/><rect x="569.31" y="0" width="0.65" height="3.6" fill="#646464"/><rect x="571.29" y="0" width="0.65" height="5.0" fill="#6c6c6c"/><rect x="573.27" y="0" width="0.65" height="3.6" fill="#646464"/><rect x="575.25" y="0" width="0.65" height="5.0" fill="#6c6c6c"/><rect x="577.23" y="0" width="0.65" height="3.6" fill="#646464"/><rect x="579.21" y="0" width="0.65" height="5.0" fill="#6c6c6c"/><rect x="581.19" y="0" width="0.65" height="3.6" fill="#646464"/><rect x="585.15" y="0" width="0.65" height="3.6" fill="#646464"/><rect x="587.13" y="0" width="0.65" height="5.0" fill="#6c6c6c"/><rect x="589.11" y="0" width="0.65" height="3.6" fill="#646464"/><rect x="591.09" y="0" width="0.65" height="5.0" fill="#6c6c6c"/><rect x="593.07" y="0" width="0.65" height="3.6" fill="#646464"/><rect x="595.05" y="0" width="0.65" height="5.0" fill="#6c6c6c"/><rect x="597.03" y="0" width="0.65" height="3.6" fill="#646464"/><rect x="599.01" y="0" width="0.65" height="5.0" fill="#6c6c6c"/><rect x="601.00" y="0" width="0.65" height="3.6" fill="#646464"/><rect x="602.97" y="0" width="0.65" height="5.0" fill="#6c6c6c"/><rect x="604.95" y="0" width="0.65" height="3.6" fill="#646464"/><rect x="606.93" y="0" width="0.65" height="5.0" fill="#6c6c6c"/><rect x="608.91" y="0" width="0.65" height="3.6" fill="#646464"/><rect x="610.89" y="0" width="0.65" height="5.0" fill="#6c6c6c"/><rect x="612.88" y="0" width="0.65" height="3.6" fill="#646464"/><rect x="614.85" y="0" width="0.65" height="5.0" fill="#6c6c6c"/><rect x="616.83" y="0" width="0.65" height="3.6" fill="#646464"/><rect x="618.81" y="0" width="0.65" height="5.0" fill="#6c6c6c"/><rect x="620.79" y="0" width="0.65" height="3.6" fill="#646464"/><rect x="622.77" y="0" width="0.65" height="5.0" fill="#6c6c6c"/><rect x="624.75" y="0" width="0.65" height="3.6" fill="#646464"/><rect x="626.73" y="0" width="0.65" height="5.0" fill="#6c6c6c"/><rect x="628.71" y="0" width="0.65" height="3.6" fill="#646464"/><rect x="630.69" y="0" width="0.65" height="5.0" fill="#6c6c6c"/><rect x="632.60" y="0" width="0.80" height="7.2" fill="#8e8e8e"/><rect x="634.65" y="0" width="0.65" height="5.0" fill="#6c6c6c"/><rect x="636.63" y="0" width="0.65" height="3.6" fill="#646464"/><rect x="638.61" y="0" width="0.65" height="5.0" fill="#6c6c6c"/><rect x="640.59" y="0" width="0.65" height="3.6" fill="#646464"/><rect x="642.57" y="0" width="0.65" height="5.0" fill="#6c6c6c"/><rect x="644.55" y="0" width="0.65" height="3.6" fill="#646464"/><rect x="646.53" y="0" width="0.65" height="5.0" fill="#6c6c6c"/><rect x="648.51" y="0" width="0.65" height="3.6" fill="#646464"/><rect x="650.50" y="0" width="0.65" height="5.0" fill="#6c6c6c"/><rect x="652.47" y="0" width="0.65" height="3.6" fill="#646464"/><rect x="654.45" y="0" width="0.65" height="5.0" fill="#6c6c6c"/><rect x="656.43" y="0" width="0.65" height="3.6" fill="#646464"/><rect x="658.41" y="0" width="0.65" height="5.0" fill="#6c6c6c"/><rect x="660.39" y="0" width="0.65" height="3.6" fill="#646464"/><rect x="662.38" y="0" width="0.65" height="5.0" fill="#6c6c6c"/><rect x="664.35" y="0" width="0.65" height="3.6" fill="#646464"/><rect x="666.33" y="0" width="0.65" height="5.0" fill="#6c6c6c"/><rect x="668.31" y="0" width="0.65" height="3.6" fill="#646464"/><rect x="670.29" y="0" width="0.65" height="5.0" fill="#6c6c6c"/><rect x="672.27" y="0" width="0.65" height="3.6" fill="#646464"/><rect x="674.25" y="0" width="0.65" height="5.0" fill="#6c6c6c"/><rect x="676.23" y="0" width="0.65" height="3.6" fill="#646464"/><rect x="678.21" y="0" width="0.65" height="5.0" fill="#6c6c6c"/><rect x="680.19" y="0" width="0.65" height="3.6" fill="#646464"/><rect x="684.15" y="0" width="0.65" height="3.6" fill="#646464"/><rect x="686.13" y="0" width="0.65" height="5.0" fill="#6c6c6c"/><rect x="688.11" y="0" width="0.65" height="3.6" fill="#646464"/><rect x="690.09" y="0" width="0.65" height="5.0" fill="#6c6c6c"/><rect x="692.07" y="0" width="0.65" height="3.6" fill="#646464"/><rect x="694.05" y="0" width="0.65" height="5.0" fill="#6c6c6c"/><rect x="696.03" y="0" width="0.65" height="3.6" fill="#646464"/><rect x="698.01" y="0" width="0.65" height="5.0" fill="#6c6c6c"/><rect x="700.00" y="0" width="0.65" height="3.6" fill="#646464"/><rect x="701.97" y="0" width="0.65" height="5.0" fill="#6c6c6c"/><rect x="703.95" y="0" width="0.65" height="3.6" fill="#646464"/><rect x="705.93" y="0" width="0.65" height="5.0" fill="#6c6c6c"/><rect x="707.91" y="0" width="0.65" height="3.6" fill="#646464"/><rect x="709.89" y="0" width="0.65" height="5.0" fill="#6c6c6c"/><rect x="711.88" y="0" width="0.65" height="3.6" fill="#646464"/><rect x="713.85" y="0" width="0.65" height="5.0" fill="#6c6c6c"/><rect x="715.83" y="0" width="0.65" height="3.6" fill="#646464"/><rect x="717.81" y="0" width="0.65" height="5.0" fill="#6c6c6c"/><rect x="719.79" y="0" width="0.65" height="3.6" fill="#646464"/><rect x="721.77" y="0" width="0.65" height="5.0" fill="#6c6c6c"/><rect x="723.75" y="0" width="0.65" height="3.6" fill="#646464"/><rect x="725.73" y="0" width="0.65" height="5.0" fill="#6c6c6c"/><rect x="727.71" y="0" width="0.65" height="3.6" fill="#646464"/><rect x="729.69" y="0" width="0.65" height="5.0" fill="#6c6c6c"/><rect x="731.60" y="0" width="0.80" height="7.2" fill="#8e8e8e"/><rect x="733.65" y="0" width="0.65" height="5.0" fill="#6c6c6c"/><rect x="735.63" y="0" width="0.65" height="3.6" fill="#646464"/><rect x="737.61" y="0" width="0.65" height="5.0" fill="#6c6c6c"/><rect x="739.59" y="0" width="0.65" height="3.6" fill="#646464"/><rect x="741.57" y="0" width="0.65" height="5.0" fill="#6c6c6c"/><rect x="743.55" y="0" width="0.65" height="3.6" fill="#646464"/><rect x="745.53" y="0" width="0.65" height="5.0" fill="#6c6c6c"/><rect x="747.51" y="0" width="0.65" height="3.6" fill="#646464"/><rect x="749.49" y="0" width="0.65" height="5.0" fill="#6c6c6c"/><rect x="751.47" y="0" width="0.65" height="3.6" fill="#646464"/><rect x="753.45" y="0" width="0.65" height="5.0" fill="#6c6c6c"/><rect x="755.43" y="0" width="0.65" height="3.6" fill="#646464"/><rect x="757.41" y="0" width="0.65" height="5.0" fill="#6c6c6c"/><rect x="759.39" y="0" width="0.65" height="3.6" fill="#646464"/><rect x="761.38" y="0" width="0.65" height="5.0" fill="#6c6c6c"/><rect x="763.35" y="0" width="0.65" height="3.6" fill="#646464"/><rect x="765.33" y="0" width="0.65" height="5.0" fill="#6c6c6c"/><rect x="767.31" y="0" width="0.65" height="3.6" fill="#646464"/><rect x="769.29" y="0" width="0.65" height="5.0" fill="#6c6c6c"/><rect x="771.27" y="0" width="0.65" height="3.6" fill="#646464"/><rect x="773.25" y="0" width="0.65" height="5.0" fill="#6c6c6c"/><rect x="775.23" y="0" width="0.65" height="3.6" fill="#646464"/><rect x="777.21" y="0" width="0.65" height="5.0" fill="#6c6c6c"/><rect x="779.19" y="0" width="0.65" height="3.6" fill="#646464"/><rect x="783.15" y="0" width="0.65" height="3.6" fill="#646464"/><rect x="785.13" y="0" width="0.65" height="5.0" fill="#6c6c6c"/><rect x="787.11" y="0" width="0.65" height="3.6" fill="#646464"/><rect x="789.09" y="0" width="0.65" height="5.0" fill="#6c6c6c"/><rect x="791.07" y="0" width="0.65" height="3.6" fill="#646464"/><rect x="793.05" y="0" width="0.65" height="5.0" fill="#6c6c6c"/><rect x="795.03" y="0" width="0.65" height="3.6" fill="#646464"/><rect x="797.01" y="0" width="0.65" height="5.0" fill="#6c6c6c"/><rect x="798.99" y="0" width="0.65" height="3.6" fill="#646464"/><rect x="800.97" y="0" width="0.65" height="5.0" fill="#6c6c6c"/><rect x="802.95" y="0" width="0.65" height="3.6" fill="#646464"/><rect x="804.93" y="0" width="0.65" height="5.0" fill="#6c6c6c"/><rect x="806.91" y="0" width="0.65" height="3.6" fill="#646464"/><rect x="808.89" y="0" width="0.65" height="5.0" fill="#6c6c6c"/><rect x="810.88" y="0" width="0.65" height="3.6" fill="#646464"/><rect x="812.85" y="0" width="0.65" height="5.0" fill="#6c6c6c"/><rect x="814.83" y="0" width="0.65" height="3.6" fill="#646464"/><rect x="816.81" y="0" width="0.65" height="5.0" fill="#6c6c6c"/><rect x="818.79" y="0" width="0.65" height="3.6" fill="#646464"/><rect x="820.77" y="0" width="0.65" height="5.0" fill="#6c6c6c"/><rect x="822.75" y="0" width="0.65" height="3.6" fill="#646464"/><rect x="824.73" y="0" width="0.65" height="5.0" fill="#6c6c6c"/></svg>
<div class="a" style="left:204.05px;top:229.6px;width:0.9px;height:12.5px;background:linear-gradient(180deg,#c0c0c0,#8a8a8a 55%,rgba(120,120,120,0));"></div>
<div class="a" style="left:204px;top:249.5px;width:1px;height:255px;background:#474747;"></div>
<span class="t" style="left:207.10px;top:238.0px;font-size:5.60px;line-height:5.60px;color:#d2d2d2;font-weight:normal;-webkit-text-stroke:0.3px #d2d2d2;transform:scaleX(0.9674);">01:44:16:00</span>
<div class="a" style="left:303.05px;top:229.6px;width:0.9px;height:12.5px;background:linear-gradient(180deg,#c0c0c0,#8a8a8a 55%,rgba(120,120,120,0));"></div>
<div class="a" style="left:303px;top:249.5px;width:1px;height:255px;background:#474747;"></div>
<span class="t" style="left:306.10px;top:238.0px;font-size:5.60px;line-height:5.60px;color:#d2d2d2;font-weight:normal;-webkit-text-stroke:0.3px #d2d2d2;transform:scaleX(0.9674);">01:44:24:00</span>
<div class="a" style="left:402.05px;top:229.6px;width:0.9px;height:12.5px;background:linear-gradient(180deg,#c0c0c0,#8a8a8a 55%,rgba(120,120,120,0));"></div>
<div class="a" style="left:402px;top:249.5px;width:1px;height:255px;background:#474747;"></div>
<span class="t" style="left:405.10px;top:238.0px;font-size:5.60px;line-height:5.60px;color:#d2d2d2;font-weight:normal;-webkit-text-stroke:0.3px #d2d2d2;transform:scaleX(0.9674);">01:44:32:00</span>
<div class="a" style="left:501.05px;top:229.6px;width:0.9px;height:12.5px;background:linear-gradient(180deg,#c0c0c0,#8a8a8a 55%,rgba(120,120,120,0));"></div>
<div class="a" style="left:501px;top:249.5px;width:1px;height:255px;background:#474747;"></div>
<span class="t" style="left:504.10px;top:238.0px;font-size:5.60px;line-height:5.60px;color:#d2d2d2;font-weight:normal;-webkit-text-stroke:0.3px #d2d2d2;transform:scaleX(0.9674);">01:44:40:00</span>
<div class="a" style="left:600.05px;top:229.6px;width:0.9px;height:12.5px;background:linear-gradient(180deg,#c0c0c0,#8a8a8a 55%,rgba(120,120,120,0));"></div>
<div class="a" style="left:600px;top:249.5px;width:1px;height:255px;background:#474747;"></div>
<span class="t" style="left:603.10px;top:238.0px;font-size:5.60px;line-height:5.60px;color:#d2d2d2;font-weight:normal;-webkit-text-stroke:0.3px #d2d2d2;transform:scaleX(0.9674);">01:44:48:00</span>
<div class="a" style="left:699.05px;top:229.6px;width:0.9px;height:12.5px;background:linear-gradient(180deg,#c0c0c0,#8a8a8a 55%,rgba(120,120,120,0));"></div>
<div class="a" style="left:699px;top:249.5px;width:1px;height:255px;background:#474747;"></div>
<span class="t" style="left:702.10px;top:238.0px;font-size:5.60px;line-height:5.60px;color:#d2d2d2;font-weight:normal;-webkit-text-stroke:0.3px #d2d2d2;transform:scaleX(0.9674);">01:44:56:00</span>
<div class="a" style="left:798.05px;top:229.6px;width:0.9px;height:12.5px;background:linear-gradient(180deg,#c0c0c0,#8a8a8a 55%,rgba(120,120,120,0));"></div>
<div class="a" style="left:798px;top:249.5px;width:1px;height:255px;background:#474747;"></div>
<span class="t" style="left:801.10px;top:238.0px;font-size:5.60px;line-height:5.60px;color:#d2d2d2;font-weight:normal;-webkit-text-stroke:0.3px #d2d2d2;transform:scaleX(0.9674);">01:45:04:00</span>
<div class="a" style="left:897.05px;top:229.6px;width:0.9px;height:12.5px;background:linear-gradient(180deg,#c0c0c0,#8a8a8a 55%,rgba(120,120,120,0));"></div>
<div class="a" style="left:897px;top:249.5px;width:1px;height:255px;background:#474747;"></div>
<span class="t" style="left:900.10px;top:238.0px;font-size:5.60px;line-height:5.60px;color:#d2d2d2;font-weight:normal;-webkit-text-stroke:0.3px #d2d2d2;transform:scaleX(0.9674);">01:45:12:00</span>
<div class="a" style="left:116px;top:233px;width:26px;height:12px;overflow:hidden"><span class="t" style="left:-7.40px;top:5.0px;font-size:5.60px;line-height:5.60px;color:#d2d2d2;font-weight:normal;-webkit-text-stroke:0.3px #d2d2d2;transform:scaleX(0.9674);">01:44:08:00</span></div>
<div class="a" style="left:116px;top:248.9px;width:828px;height:0.7px;background:#242424;"></div>
<div class="a" style="left:142.3px;top:248.6px;width:12.7px;height:1.1px;background:#d2502c;"></div>
<div class="a" style="left:334px;top:248.7px;width:15px;height:1px;background:#6f86b4;"></div>
<div class="a" style="left:564px;top:248.7px;width:18px;height:1px;background:#6f86b4;"></div>
<div class="a" style="left:752px;top:248.7px;width:21px;height:1px;background:#6f86b4;"></div>
<div class="a" style="left:116px;top:320.4px;width:834px;height:0.8px;background:#2c2c2c;"></div>
<div class="a" style="left:116px;top:362.4px;width:834px;height:0.8px;background:#2c2c2c;"></div>
<div class="a" style="left:116px;top:404.4px;width:834px;height:0.8px;background:#2c2c2c;"></div>
<div class="a" style="left:0px;top:446.2px;width:950px;height:1.7px;background:#4d4d4d;"></div>
<div class="a" style="left:0px;top:504.8px;width:950px;height:5.5px;background:#373737;"></div>
<div class="a" style="left:116px;top:482.3px;width:828px;height:0.8px;background:#2b2b2b;"></div>
<div class="a" style="left:448.4px;top:506.3px;width:14.4px;height:2.8px;background:#8a8a8a;border-radius:1.4px"></div>
<div class="a" style="left:940.5px;top:229.5px;width:3.7px;height:275.3px;background:linear-gradient(90deg,rgba(28,28,28,0),rgba(28,28,28,.75));"></div>
<div class="a" style="left:944.2px;top:229.5px;width:5.8px;height:275.3px;background:#3a3a3a;"></div>
<div class="a" style="left:0px;top:320.4px;width:114.2px;height:42px;background:#292929;"></div><div class="a" style="left:0px;top:320.4px;width:114.2px;height:0.8px;background:#191919;"></div><div class="a" style="left:0px;top:333.4px;width:114.2px;height:0.8px;background:#1b1b1b;"></div><div class="a" style="left:9.2px;top:320.4px;width:0.8px;height:42px;background:#1b1b1b;"></div><div class="a" style="left:31.3px;top:320.4px;width:0.8px;height:13px;background:#1b1b1b;"></div><div class="a" style="left:0px;top:320.4px;width:1.7px;height:42px;background:#5c9fe6;"></div><span class="t" style="left:18.00px;top:324.5px;font-size:7.00px;line-height:7.00px;color:#f2f2f2;transform:scaleX(0.8993);">V3</span><span class="t" style="left:35.40px;top:325.5px;font-size:6.40px;line-height:6.40px;color:#f0f0f0;transform:scaleX(0.9105);">Video 3</span><span class="t" style="left:17.00px;top:350.5px;font-size:6.20px;line-height:6.20px;color:#6c6c6c;font-weight:normal;-webkit-text-stroke:0.3px #6c6c6c;transform:scaleX(0.9477);">1 Clip</span><svg style="left:17.80px;top:336.20px" width="7.00" height="7.20" viewBox="0 0 7.00 7.20"><path d="M1.300 3V2.200Q1.300.500 3.200.500Q5.100.500 5.300 1.900" fill="none" stroke="#8e8e8e" stroke-width=".9"/><rect x=".5" y="3" width="5.900" height="3.700" rx=".7" fill="none" stroke="#8e8e8e" stroke-width=".9"/></svg><svg style="left:32.00px;top:336.50px" width="9.00" height="6.90" viewBox="0 0 9.00 6.90"><rect x=".5" y=".5" width="8" height="5.900" rx=".8" fill="#2a2a2a" stroke="#b2b2b2" stroke-width="1"/><path d="M3.600 2L2.300 3.450 3.600 4.900M5.400 2L6.700 3.450 5.400 4.900" fill="none" stroke="#e0e0e0" stroke-width=".9"/><rect x="4.200" y="2.400" width=".6" height="2.100" fill="#e0e0e0"/></svg><svg style="left:47.70px;top:337.20px" width="9.40" height="6.20" viewBox="0 0 9.40 6.20"><rect x=".6" y=".6" width="8.200" height="5" rx=".6" fill="#323232" stroke="#a8a8a8" stroke-width="1.100"/></svg>
<div class="a" style="left:0px;top:362.4px;width:114.2px;height:42px;background:#292929;"></div><div class="a" style="left:0px;top:362.4px;width:114.2px;height:0.8px;background:#191919;"></div><div class="a" style="left:0px;top:375.4px;width:114.2px;height:0.8px;background:#1b1b1b;"></div><div class="a" style="left:9.2px;top:362.4px;width:0.8px;height:42px;background:#1b1b1b;"></div><div class="a" style="left:31.3px;top:362.4px;width:0.8px;height:13px;background:#1b1b1b;"></div><div class="a" style="left:0px;top:362.4px;width:1.7px;height:42px;background:#5c9fe6;"></div><span class="t" style="left:18.00px;top:366.5px;font-size:7.00px;line-height:7.00px;color:#f2f2f2;transform:scaleX(0.8993);">V2</span><span class="t" style="left:35.40px;top:367.5px;font-size:6.40px;line-height:6.40px;color:#f0f0f0;transform:scaleX(0.9105);">Video 2</span><span class="t" style="left:17.00px;top:392.5px;font-size:6.20px;line-height:6.20px;color:#6c6c6c;font-weight:normal;-webkit-text-stroke:0.3px #6c6c6c;transform:scaleX(0.9437);">34 Clips</span><svg style="left:17.80px;top:378.20px" width="7.00" height="7.20" viewBox="0 0 7.00 7.20"><path d="M1.300 3V2.200Q1.300.500 3.200.500Q5.100.500 5.300 1.900" fill="none" stroke="#8e8e8e" stroke-width=".9"/><rect x=".5" y="3" width="5.900" height="3.700" rx=".7" fill="none" stroke="#8e8e8e" stroke-width=".9"/></svg><svg style="left:32.00px;top:378.50px" width="9.00" height="6.90" viewBox="0 0 9.00 6.90"><rect x=".5" y=".5" width="8" height="5.900" rx=".8" fill="#2a2a2a" stroke="#b2b2b2" stroke-width="1"/><path d="M3.600 2L2.300 3.450 3.600 4.900M5.400 2L6.700 3.450 5.400 4.900" fill="none" stroke="#e0e0e0" stroke-width=".9"/><rect x="4.200" y="2.400" width=".6" height="2.100" fill="#e0e0e0"/></svg><svg style="left:47.70px;top:379.20px" width="9.40" height="6.20" viewBox="0 0 9.40 6.20"><rect x=".6" y=".6" width="8.200" height="5" rx=".6" fill="#323232" stroke="#a8a8a8" stroke-width="1.100"/></svg>
<div class="a" style="left:0px;top:404.4px;width:114.2px;height:42px;background:#292929;"></div><div class="a" style="left:0px;top:404.4px;width:114.2px;height:0.8px;background:#191919;"></div><div class="a" style="left:0px;top:417.4px;width:114.2px;height:0.8px;background:#1b1b1b;"></div><div class="a" style="left:9.2px;top:404.4px;width:0.8px;height:42px;background:#1b1b1b;"></div><div class="a" style="left:31.3px;top:404.4px;width:0.8px;height:13px;background:#1b1b1b;"></div><div class="a" style="left:0px;top:404.4px;width:1.7px;height:42px;background:#5c9fe6;"></div><div class="a" style="left:13.1px;top:406.1px;width:16.2px;height:9.8px;border:1px solid #c8553a;border-radius:1px"></div><span class="t" style="left:18.20px;top:409.5px;font-size:6.20px;line-height:6.20px;color:#b8b8b8;font-weight:normal;transform:scaleX(0.8709);">V1</span><span class="t" style="left:35.40px;top:409.5px;font-size:6.40px;line-height:6.40px;color:#f0f0f0;transform:scaleX(0.8751);">Video 1</span><span class="t" style="left:17.00px;top:434.5px;font-size:6.20px;line-height:6.20px;color:#6c6c6c;font-weight:normal;-webkit-text-stroke:0.3px #6c6c6c;transform:scaleX(0.9575);">163 Clips</span><svg style="left:17.80px;top:420.20px" width="7.00" height="7.20" viewBox="0 0 7.00 7.20"><path d="M1.300 3V2.200Q1.300.500 3.200.500Q5.100.500 5.300 1.900" fill="none" stroke="#8e8e8e" stroke-width=".9"/><rect x=".5" y="3" width="5.900" height="3.700" rx=".7" fill="none" stroke="#8e8e8e" stroke-width=".9"/></svg><svg style="left:32.00px;top:420.50px" width="9.00" height="6.90" viewBox="0 0 9.00 6.90"><rect x=".5" y=".5" width="8" height="5.900" rx=".8" fill="#2a2a2a" stroke="#b2b2b2" stroke-width="1"/><path d="M3.600 2L2.300 3.450 3.600 4.900M5.400 2L6.700 3.450 5.400 4.900" fill="none" stroke="#e0e0e0" stroke-width=".9"/><rect x="4.200" y="2.400" width=".6" height="2.100" fill="#e0e0e0"/></svg><svg style="left:47.70px;top:421.20px" width="9.40" height="6.20" viewBox="0 0 9.40 6.20"><rect x=".6" y=".6" width="8.200" height="5" rx=".6" fill="#323232" stroke="#a8a8a8" stroke-width="1.100"/></svg>
<div class="a" style="left:0px;top:447.9px;width:114.2px;height:34.2px;background:#292929;"></div>
<div class="a" style="left:0px;top:460.4px;width:114.2px;height:0.8px;background:#1b1b1b;"></div>
<div class="a" style="left:9.2px;top:447.9px;width:0.8px;height:34.2px;background:#1b1b1b;"></div>
<div class="a" style="left:31.3px;top:447.9px;width:0.8px;height:12.5px;background:#1b1b1b;"></div>
<div class="a" style="left:0px;top:447.9px;width:1.7px;height:34.2px;background:#4ccf88;"></div>
<div class="a" style="left:0px;top:482.1px;width:114.2px;height:0.8px;background:#1b1b1b;"></div>
<span class="t" style="left:18.70px;top:451.5px;font-size:7.00px;line-height:7.00px;color:#f2f2f2;transform:scaleX(0.7818);">A1</span>
<span class="t" style="left:35.40px;top:452.5px;font-size:6.40px;line-height:6.40px;color:#f0f0f0;transform:scaleX(0.8789);">Audio 1</span>
<span class="t" style="left:104.80px;top:452.5px;font-size:6.00px;line-height:6.00px;color:#d8d8d8;font-weight:normal;-webkit-text-stroke:0.3px #d8d8d8;transform:scaleX(0.8749);">1.0</span>
<svg style="left:17.80px;top:464.80px" width="7.00" height="7.20" viewBox="0 0 7.00 7.20"><path d="M1.300 3V2.200Q1.300.500 3.200.500Q5.100.500 5.300 1.900" fill="none" stroke="#8e8e8e" stroke-width=".9"/><rect x=".5" y="3" width="5.900" height="3.700" rx=".7" fill="none" stroke="#8e8e8e" stroke-width=".9"/></svg><svg style="left:32.00px;top:465.10px" width="9.00" height="6.90" viewBox="0 0 9.00 6.90"><rect x=".5" y=".5" width="8" height="5.900" rx=".8" fill="#2a2a2a" stroke="#b2b2b2" stroke-width="1"/><path d="M3.600 2L2.300 3.450 3.600 4.900M5.400 2L6.700 3.450 5.400 4.900" fill="none" stroke="#e0e0e0" stroke-width=".9"/><rect x="4.200" y="2.400" width=".6" height="2.100" fill="#e0e0e0"/></svg><div class="a" style="left:47.1px;top:463.4px;width:10px;height:10.400px;border:.9px solid #a4a4a4;border-radius:1.200px"></div><span class="t" style="left:50.50px;top:467.5px;font-size:5.60px;line-height:5.60px;color:#c4c4c4;transform:scaleX(0.9105);">S</span><div class="a" style="left:62.4px;top:463.4px;width:10px;height:10.400px;border:.9px solid #a4a4a4;border-radius:1.200px"></div><span class="t" style="left:65.10px;top:467.5px;font-size:5.60px;line-height:5.60px;color:#c4c4c4;transform:scaleX(0.9846);">M</span>
<svg width="0" height="0" style="left:0;top:0"><defs>
<filter id="b1" x="-20%" y="-20%" width="140%" height="140%"><feGaussianBlur stdDeviation=".7"/></filter>
<filter id="b2" x="-20%" y="-20%" width="140%" height="140%"><feGaussianBlur stdDeviation="1.4"/></filter>
<filter id="b3" x="-30%" y="-30%" width="160%" height="160%"><feGaussianBlur stdDeviation="3"/></filter>
<filter id="gr" x="0" y="0" width="100%" height="100%"><feTurbulence type="fractalNoise" baseFrequency=".55" numOctaves="3" seed="4"/><feColorMatrix type="matrix" values="1.6 0 0 0 -.12  1.6 0 0 0 -.12  1.6 0 0 0 -.12  0 0 0 0 1"/></filter>
<filter id="gr2" x="0" y="0" width="100%" height="100%"><feTurbulence type="fractalNoise" baseFrequency=".25 .35" numOctaves="3" seed="11"/><feColorMatrix type="matrix" values="1.8 0 0 0 -.2  1.8 0 0 0 -.2  1.8 0 0 0 -.2  0 0 0 0 1"/></filter>
<filter id="b5" x="-30%" y="-30%" width="160%" height="160%"><feGaussianBlur stdDeviation="5"/></filter>
<linearGradient id="gA" x1="0" y1="0" x2="0" y2="1"><stop offset="0" stop-color="#b4b4b4"/><stop offset=".3" stop-color="#a0a0a0"/><stop offset=".45" stop-color="#6e6e6e"/><stop offset=".62" stop-color="#8a8a8a"/><stop offset=".8" stop-color="#b2b2b2"/><stop offset="1" stop-color="#9c9c9c"/></linearGradient>
<linearGradient id="gB" x1="0" y1="0" x2="0" y2="1"><stop offset="0" stop-color="#a2a2a2"/><stop offset=".5" stop-color="#a8a8a8"/><stop offset=".62" stop-color="#9a9a9a"/><stop offset=".7" stop-color="#b8b8b8"/><stop offset="1" stop-color="#b0b0b0"/></linearGradient>
<linearGradient id="gC" x1="0" y1="0" x2="0" y2="1"><stop offset="0" stop-color="#c6c6c6"/><stop offset=".7" stop-color="#c9c9c9"/><stop offset="1" stop-color="#bcbcbc"/></linearGradient>
<linearGradient id="gD" x1="0" y1="0" x2="0" y2="1"><stop offset="0" stop-color="#cdcdcd"/><stop offset=".7" stop-color="#c6c6c6"/><stop offset="1" stop-color="#c0c0c0"/></linearGradient>
<g id="sA"><rect width="33.600" height="25.600" fill="#a8a8a8"/>
<g filter="url(#b1)"><rect y="0" width="33.600" height="4" fill="#b2b2b2"/><path d="M1 1.800L15 1 17.500 4.500 3 5.200Z" fill="#d4d4d4"/><path d="M2.500 5.500L12 4.800 17 5 21 8 21.500 16 2.500 16.500Z" fill="#6a6a6a"/><path d="M8 9H14V13H8Z" fill="#5a5a5a"/><path d="M22 4H33.600V15H22Z" fill="#a6a6a6"/><path d="M23 9Q26 6 29 9L30 14H23Z" fill="#868686"/><path d="M20 5L28 4 30 6.500 22 7Z" fill="#c2c2c2"/><path d="M11 14.300H31V16.300H11Z" fill="#c6c6c6"/><rect y="16.800" width="33.600" height="9" fill="#a0a0a0"/><path d="M2 19H11L12 23H1Z" fill="#7e7e7e"/><path d="M19 20H28V24H18Z" fill="#888"/><path d="M12 21.500H19V23H12Z" fill="#c0c0c0"/><rect y="24.600" width="33.600" height="1" fill="#8a8a8a"/></g></g>
<g id="sB"><rect width="33.600" height="25.600" fill="url(#gB)"/>
<g filter="url(#b1)"><path d="M0 9Q3 6 5 9L8 13V17H0Z" fill="#5c5c5c"/><path d="M13 15Q17 9 21 12L26 14 24 17H13Z" fill="#7a7a7a"/><path d="M28 3Q31 1 33.600 4V16H28Z" fill="#585858"/><path d="M0 16L33.600 16V18L0 19Z" fill="#8e8e8e"/><path d="M9 25.600Q24 23 30 18" fill="none" stroke="#5a5a5a" stroke-width="1"/><path d="M14 25.600Q27 23.500 32 19" fill="none" stroke="#666" stroke-width=".9"/></g></g>
<g id="sC"><rect width="33.600" height="25.600" fill="url(#gC)"/><rect y="19.500" width="33.600" height=".5" fill="#b2b2b2"/></g>
<g id="sD"><rect width="33.600" height="25.600" fill="url(#gD)"/>
<g filter="url(#b1)"><path d="M8 10Q10 6 12 10L12.500 25H9.500Z" fill="#4e4e4e"/><ellipse cx="9" cy="13" rx="3" ry="3" fill="#8c8c8c"/><ellipse cx="24" cy="11" rx="4" ry="3" fill="#a6a6a6"/><rect y="19" width="33.600" height=".6" fill="#a8a8a8"/></g></g>
</defs></svg><div class="a" style="left:142.5px;top:320.9px;width:206.3px;height:40.3px;background:#5f9ad8;border-radius:1.6px;overflow:hidden"><div class="a" style="left:0;top:0;width:100%;height:1.9px;background:#6aa6e5"></div><svg style="left:0;top:0" width="206.3" height="40" viewBox="0 0 206.3 40"><g transform="translate(0,2)"><rect x=".7" y="0" width="204.9" height="26" fill="#8c8c8c"/><clipPath id="cp1745"><rect x=".7" y="0" width="204.9" height="26"/></clipPath><g clip-path="url(#cp1745)"><g transform="scale(1,1.016)"><g transform="translate(1.9,0)"><use href="#sA"/><rect x="0" y="0" width=".5" height="25.600" fill="#4a4a4a" opacity=".4"/></g><g transform="translate(35.4,0)"><use href="#sA"/><rect x="0" y="0" width=".5" height="25.600" fill="#4a4a4a" opacity=".4"/></g><g transform="translate(68.9,0)"><use href="#sA"/><rect x="11" y="14" width="9" height="4.500" fill="#454545" filter="url(#b1)"/><rect x="0" y="0" width=".5" height="25.600" fill="#4a4a4a" opacity=".4"/></g><g transform="translate(102.4,0)"><use href="#sA"/><rect x="4.400" y="13.600" width="8.200" height="5.600" fill="#363636" filter="url(#b1)"/><rect x="0" y="0" width=".5" height="25.600" fill="#4a4a4a" opacity=".4"/></g><g transform="translate(135.9,0)"><use href="#sA"/><rect x="3.500" y="13" width="7" height="7" fill="#333" filter="url(#b1)"/><rect x="0" y="0" width=".5" height="25.600" fill="#4a4a4a" opacity=".4"/></g><g transform="translate(169.4,0)"><use href="#sA"/><rect x="3" y="14" width="14" height="7" fill="#404040" filter="url(#b1)"/><rect x="0" y="0" width=".5" height="25.600" fill="#4a4a4a" opacity=".4"/></g><g transform="translate(202.9,0)"><use href="#sA"/><rect x="0" y="8" width="6" height="17" fill="#5a5a5a" filter="url(#b2)"/><rect x="0" y="0" width=".5" height="25.600" fill="#4a4a4a" opacity=".4"/></g></g><rect x=".7" y="0" width="204.9" height="26" filter="url(#gr)" opacity=".09"/><rect x=".7" y="0" width="204.9" height=".6" fill="#1e1e1e" opacity=".55"/></g><g transform="translate(0.5,0)"><path d="M.9 25.300V.700H10.4Z" fill="#dedede" opacity=".93"/><rect x=".45" y=".35" width="10.8" height="25.500" fill="none" stroke="#f0f0f0" stroke-width=".9"/><rect x="1.200" y="1.100" width="9.3" height="24" fill="none" stroke="#8c8c8c" stroke-width=".5" opacity=".7"/></g><g transform="translate(192.1,0)"><path d="M.9 25.300V.700H12.6Z" fill="#dedede" opacity=".93"/><rect x=".45" y=".35" width="13.0" height="25.500" fill="none" stroke="#f0f0f0" stroke-width=".9"/><rect x="1.200" y="1.100" width="11.5" height="24" fill="none" stroke="#8c8c8c" stroke-width=".5" opacity=".7"/></g></g></svg><span class="t" style="left:2.10px;top:34.0px;font-size:5.90px;line-height:5.90px;color:#ffffff;transform:scaleX(0.9225);">SE alles bewerkt 1e run.mov</span></div><div class="a" style="left:334.8px;top:362.9px;width:247.4px;height:40.3px;background:#5f9ad8;border-radius:1.6px;overflow:hidden"><div class="a" style="left:0;top:0;width:100%;height:1.9px;background:#6aa6e5"></div><svg style="left:0;top:0" width="247.4" height="40" viewBox="0 0 247.4 40"><g transform="translate(0,2)"><rect x=".7" y="0" width="246.0" height="26" fill="#8c8c8c"/><clipPath id="cp3710"><rect x=".7" y="0" width="246.0" height="26"/></clipPath><g clip-path="url(#cp3710)"><g transform="scale(1,1.016)"><g transform="translate(0.7,0)"><use href="#sC"/><rect width="26" height="25.600" fill="#d4d4d4"/><path d="M4 0H15L14 9 12 13H9L8 9 5 8Z" fill="#6a6a6a" filter="url(#b1)"/><path d="M13 0H22V25.600H19.500V17L17 14 14.500 13Z" fill="#5a5a5a" filter="url(#b1)"/><rect x="0" y="0" width=".5" height="25.600" fill="#4a4a4a" opacity=".4"/></g><g transform="translate(26.2,0)"><use href="#sB"/><rect x="0" y="0" width=".5" height="25.600" fill="#4a4a4a" opacity=".4"/></g><g transform="translate(59.8,0)"><use href="#sB"/><rect x="0" y="0" width=".5" height="25.600" fill="#4a4a4a" opacity=".4"/></g><g transform="translate(93.4,0)"><use href="#sB"/><rect x="0" y="0" width=".5" height="25.600" fill="#4a4a4a" opacity=".4"/></g><g transform="translate(127.0,0)"><use href="#sB"/><rect x="0" y="0" width=".5" height="25.600" fill="#4a4a4a" opacity=".4"/></g><g transform="translate(160.6,0)"><use href="#sB"/><path d="M0 3H7L11 6 12 16H0Z" fill="#2e2e2e" filter="url(#b1)"/><path d="M6 2Q14 0 20 8L12 9Z" fill="#8a8a8a" filter="url(#b2)"/><rect x="0" y="0" width=".5" height="25.600" fill="#4a4a4a" opacity=".4"/></g><g transform="translate(194.2,0)"><use href="#sC"/><rect width="34" height="25.600" fill="#8e8e8e"/><path d="M0 25.600L34 8V25.600Z" fill="#9c9c9c" filter="url(#b2)"/><rect x="28" y="2" width="5" height="14" fill="#6c6c6c" filter="url(#b2)"/><rect x="0" y="0" width=".5" height="25.600" fill="#4a4a4a" opacity=".4"/></g><g transform="translate(227.8,0)"><use href="#sC"/><rect width="34" height="25.600" fill="#a8a8a8"/><rect x="0" y="0" width=".5" height="25.600" fill="#4a4a4a" opacity=".4"/></g></g><rect x=".7" y="0" width="246.0" height="26" filter="url(#gr)" opacity=".09"/><rect x=".7" y="0" width="246.0" height=".6" fill="#1e1e1e" opacity=".55"/></g><g transform="translate(229.2,0)"><path d="M.9 25.300V.700H16.6Z" fill="#dedede" opacity=".93"/><rect x=".45" y=".35" width="17.0" height="25.500" fill="none" stroke="#f0f0f0" stroke-width=".9"/><rect x="1.200" y="1.100" width="15.5" height="24" fill="none" stroke="#8c8c8c" stroke-width=".5" opacity=".7"/></g></g></svg><span class="t" style="left:2.10px;top:34.0px;font-size:5.90px;line-height:5.90px;color:#ffffff;transform:scaleX(0.9175);">SE alles bewerkt 1e run.mov</span></div><div class="a" style="left:752.0px;top:362.9px;width:192.0px;height:40.3px;background:#5f9ad8;border-radius:1.6px;overflow:hidden"><div class="a" style="left:0;top:0;width:100%;height:1.9px;background:#6aa6e5"></div><svg style="left:0;top:0" width="192.0" height="40" viewBox="0 0 192.0 40"><g transform="translate(0,2)"><rect x=".7" y="0" width="190.6" height="26" fill="#8c8c8c"/><clipPath id="cp7882"><rect x=".7" y="0" width="190.6" height="26"/></clipPath><g clip-path="url(#cp7882)"><g transform="scale(1,1.016)"><g transform="translate(-13.6,0)"><use href="#sD"/><rect x="0" y="0" width=".5" height="25.600" fill="#4a4a4a" opacity=".4"/></g><g transform="translate(20.0,0)"><use href="#sD"/><rect x="0" y="0" width=".5" height="25.600" fill="#4a4a4a" opacity=".4"/></g><g transform="translate(53.6,0)"><use href="#sD"/><rect x="0" y="0" width=".5" height="25.600" fill="#4a4a4a" opacity=".4"/></g><g transform="translate(87.2,0)"><use href="#sD"/><ellipse cx="31" cy="15.500" rx="2.200" ry="1.800" fill="#555" filter="url(#b1)"/><rect x="0" y="0" width=".5" height="25.600" fill="#4a4a4a" opacity=".4"/></g><g transform="translate(120.8,0)"><use href="#sD"/><path d="M16 4L19 3.500 33.600 13.500V16L16 19Z" fill="#3a3a3a" filter="url(#b1)"/><rect x="0" y="0" width=".5" height="25.600" fill="#4a4a4a" opacity=".4"/></g><g transform="translate(154.4,0)"><use href="#sD"/><path d="M16 5L19 4.500 33.600 13V16L16 19Z" fill="#444" filter="url(#b1)"/><rect x="0" y="0" width=".5" height="25.600" fill="#4a4a4a" opacity=".4"/></g><g transform="translate(188.0,0)"><use href="#sD"/><rect x="0" y="0" width=".5" height="25.600" fill="#4a4a4a" opacity=".4"/></g></g><rect x=".7" y="0" width="190.6" height="26" filter="url(#gr)" opacity=".09"/><rect x=".7" y="0" width="190.6" height=".6" fill="#1e1e1e" opacity=".55"/></g><g transform="translate(0.5,0)"><path d="M.9 25.300V.700H18.2Z" fill="#dedede" opacity=".93"/><rect x=".45" y=".35" width="18.6" height="25.500" fill="none" stroke="#f0f0f0" stroke-width=".9"/><rect x="1.200" y="1.100" width="17.1" height="24" fill="none" stroke="#8c8c8c" stroke-width=".5" opacity=".7"/></g></g></svg><span class="t" style="left:1.80px;top:34.0px;font-size:5.90px;line-height:5.90px;color:#ffffff;transform:scaleX(0.9339);">SE alles bewerkt 1e run.mov</span></div><div class="a" style="left:564.7px;top:404.9px;width:207.9px;height:40.3px;background:#5f9ad8;border-radius:1.6px;overflow:hidden"><div class="a" style="left:0;top:0;width:100%;height:1.9px;background:#6aa6e5"></div><svg style="left:0;top:0" width="207.9" height="40" viewBox="0 0 207.9 40"><g transform="translate(0,2)"><rect x=".7" y="0" width="206.5" height="26" fill="#8c8c8c"/><clipPath id="cp6051"><rect x=".7" y="0" width="206.5" height="26"/></clipPath><g clip-path="url(#cp6051)"><g transform="scale(1,1.016)"><g transform="translate(-11.7,0)"><use href="#sC"/><path d="M27 0H33L32 7 30 11 28 6Z" fill="#6a6a6a" filter="url(#b2)"/><rect x="0" y="0" width=".5" height="25.600" fill="#4a4a4a" opacity=".4"/></g><g transform="translate(21.9,0)"><use href="#sC"/><rect x="0" y="0" width=".5" height="25.600" fill="#4a4a4a" opacity=".4"/></g><g transform="translate(55.5,0)"><use href="#sC"/><ellipse cx="2.800" cy="15.500" rx="1.300" ry="1.800" fill="#666" filter="url(#b1)"/><rect x="0" y="0" width=".5" height="25.600" fill="#4a4a4a" opacity=".4"/></g><g transform="translate(89.1,0)"><use href="#sC"/><ellipse cx="4.700" cy="15.500" rx="1.800" ry="2.200" fill="#555" filter="url(#b1)"/><rect x="0" y="0" width=".5" height="25.600" fill="#4a4a4a" opacity=".4"/></g><g transform="translate(122.7,0)"><use href="#sC"/><ellipse cx="9.400" cy="13.400" rx="4.600" ry="5" fill="#3a3a3a" filter="url(#b1)"/><path d="M7 8L9 4" stroke="#888" stroke-width="1.500" filter="url(#b1)"/><rect x="0" y="0" width=".5" height="25.600" fill="#4a4a4a" opacity=".4"/></g><g transform="translate(156.3,0)"><use href="#sC"/><rect width="34" height="25.600" fill="#bababa"/><rect x="0" y="0" width=".5" height="25.600" fill="#4a4a4a" opacity=".4"/></g><g transform="translate(189.9,0)"><use href="#sC"/><rect width="34" height="25.600" fill="#bcbcbc"/><rect x="0" y="0" width=".5" height="25.600" fill="#4a4a4a" opacity=".4"/></g></g><rect x=".7" y="0" width="206.5" height="26" filter="url(#gr)" opacity=".09"/><rect x=".7" y="0" width="206.5" height=".6" fill="#1e1e1e" opacity=".55"/></g></g></svg><span class="t" style="left:2.30px;top:34.0px;font-size:5.90px;line-height:5.90px;color:#ffffff;transform:scaleX(0.9100);">SE alles bewerkt 1e run.mov</span></div><div class="a" style="left:118.8px;top:404.9px;width:36.6px;height:40.3px;background:#5f9ad8;border-radius:1.6px;overflow:hidden"><div class="a" style="left:0;top:0;width:100%;height:1.9px;background:#6aa6e5"></div><svg style="left:0;top:0" width="36.6" height="40" viewBox="0 0 36.6 40"><g transform="translate(0,2)"><rect x=".7" y="0" width="35.2" height="26" fill="#8c8c8c"/><clipPath id="cp1592"><rect x=".7" y="0" width="35.2" height="26"/></clipPath><g clip-path="url(#cp1592)"><g transform="scale(1,1.016)"><g transform="translate(0.7,0)"><use href="#sC"/><rect width="36" height="25.600" fill="#8fa8dc"/><rect width="36" height="9" fill="#89a2d8"/><rect x="30.400" width="6" height="25.600" fill="#a0b5de"/><rect y="24" width="36" height="1.700" fill="#2a3a5a"/><path d="M4.500 15L22.500 12.600 22.700 14 4.700 16.600Z" fill="#f2dcb4" stroke="#d89048" stroke-width=".4"/><circle cx="22.500" cy="13" r="2" fill="#f0a868"/><circle cx="22.500" cy="13" r="1.200" fill="#fff8ee"/><rect x="6.200" y="15.500" width="1.900" height="9" fill="#e8823c"/><path d="M9.500 16L12 18 12.200 22 10 22.500 9 19Z" fill="#3e5a32"/><path d="M7 12.500L9 11.500 10 13.500" fill="#4a6a3a"/><rect x="0" y="0" width=".5" height="25.600" fill="#4a4a4a" opacity=".4"/></g></g><rect x=".7" y="0" width="35.2" height="26" filter="url(#gr)" opacity=".09"/><rect x=".7" y="0" width="35.2" height=".6" fill="#1e1e1e" opacity=".55"/></g></g></svg><span class="t" style="left:1.80px;top:34.0px;font-size:5.90px;line-height:5.90px;color:#ffffff;transform:scaleX(0.9318);">Baureihe ...</span></div><div class="a" style="left:115.6px;top:404.9px;width:2.2px;height:40.3px;background:#5f9ad8;"></div><div class="a" style="left:115.6px;top:407px;width:1.8px;height:26.4px;background:#8a8a8a;"></div>
<div class="a" style="left:479.5px;top:235px;width:1.3px;height:269.8px;background:#cc3f1f;"></div>
<svg style="left:476px;top:229.6px" width="8.4" height="6.6" viewBox="0 0 8.4 7"><path d="M.6 0H7.800Q8.400 0 8.400.600V3Q8.400 3.700 7.900 4.200L4.200 7 .5 4.200Q0 3.700 0 3V.600Q0 0 .6 0Z" fill="#ff4d26"/></svg>
<svg style="left:436.5px;top:311.5px" width="7" height="10" viewBox="0 0 7 10"><path d="M.5.5V8L2.300 6.300 3.600 9.200 4.800 8.700 3.500 5.900H6Z" fill="#1a1a1a" stroke="#e8e8e8" stroke-width=".7"/></svg>
<div class="a" style="left:0px;top:510.4px;width:950px;height:23.6px;background:#1c1c1c;"></div>
<div class="a" style="left:386.3px;top:510.4px;width:58.7px;height:23.6px;background:#000;"></div>
<div class="a" style="left:386.3px;top:532.6px;width:58.7px;height:1.4px;background:#f23c0c;"></div>
<span class="t" style="left:288.50px;top:526.5px;font-size:6.20px;line-height:6.20px;color:#c8c8c8;font-weight:normal;-webkit-text-stroke:0.3px #c8c8c8;transform:scaleX(0.9490);">Media</span>
<span class="t" style="left:351.45px;top:526.5px;font-size:6.20px;line-height:6.20px;color:#c8c8c8;font-weight:normal;-webkit-text-stroke:0.3px #c8c8c8;transform:scaleX(0.9854);">Cut</span>
<span class="t" style="left:410.15px;top:526.5px;font-size:6.20px;line-height:6.20px;color:#f4f4f4;transform:scaleX(0.8984);">Edit</span>
<span class="t" style="left:465.70px;top:526.5px;font-size:6.20px;line-height:6.20px;color:#c8c8c8;font-weight:normal;-webkit-text-stroke:0.3px #c8c8c8;transform:scaleX(0.9689);">Fusion</span>
<span class="t" style="left:526.75px;top:526.5px;font-size:6.20px;line-height:6.20px;color:#c8c8c8;font-weight:normal;-webkit-text-stroke:0.3px #c8c8c8;transform:scaleX(0.9799);">Color</span>
<span class="t" style="left:581.70px;top:526.5px;font-size:6.20px;line-height:6.20px;color:#c8c8c8;font-weight:normal;-webkit-text-stroke:0.3px #c8c8c8;transform:scaleX(1.0447);">Fairlight</span>
<span class="t" style="left:643.30px;top:526.5px;font-size:6.20px;line-height:6.20px;color:#c8c8c8;font-weight:normal;-webkit-text-stroke:0.3px #c8c8c8;transform:scaleX(0.9862);">Deliver</span>
<span class="t" style="left:36.00px;top:521.0px;font-size:6.60px;line-height:6.60px;color:#d8d8d8;font-weight:normal;-webkit-text-stroke:0.3px #d8d8d8;transform:scaleX(0.9839);">DaVinci Resolve 16</span>
<svg style="left:7.60px;top:15.70px" width="9.10" height="8.00" viewBox="0 0 9.10 8.00"><rect x=".45" y=".45" width="8.200" height="7.100" rx=".8" fill="none" stroke="#d2d2d2" stroke-width=".9"/><path d="M2.700 3L4.550 4.900 6.400 3" fill="none" stroke="#d2d2d2" stroke-width=".9"/></svg><svg style="left:32.20px;top:15.20px" width="11.00" height="8.80" viewBox="0 0 11.00 8.80"><path d="M1.300 2.300L2 .8 8.500.400 9 1.600" fill="none" stroke="#d2d2d2" stroke-width=".8"/><rect x=".8" y="2.200" width="9.400" height="6.100" rx=".9" fill="none" stroke="#d2d2d2" stroke-width="1"/><path d="M2 7.400L4.200 4.900 5.700 6.400 7 5.300 9 7.400Z" fill="#d2d2d2"/><circle cx="3.200" cy="4" r=".7" fill="#d2d2d2"/></svg><svg style="left:91.60px;top:14.80px" width="10.20" height="9.80" viewBox="0 0 10.20 9.80"><path d="M.9 9L6 3.700" stroke="#d2d2d2" stroke-width="1.700" stroke-linecap="round"/><path d="M7.300.300V2.700M6.100 1.500H8.500M9.200 3.800V5.400M8.400 4.600H10M4.200.900V2.100M3.600 1.500H4.800M7.800 6.600V7.800M7.200 7.200H8.400" stroke="#d2d2d2" stroke-width=".7"/></svg><svg style="left:159.00px;top:15.80px" width="8.80" height="7.60" viewBox="0 0 8.80 7.60"><rect x="0" y="0.0" width="1.500" height="1.500" fill="#d2d2d2"/><rect x="2.800" y="0.1" width="6" height="1.300" fill="#d2d2d2"/><rect x="0" y="3.0" width="1.500" height="1.500" fill="#d2d2d2"/><rect x="2.800" y="3.1" width="6" height="1.300" fill="#d2d2d2"/><rect x="0" y="6.0" width="1.500" height="1.500" fill="#d2d2d2"/><rect x="2.800" y="6.1" width="6" height="1.300" fill="#d2d2d2"/></svg><svg style="left:214.00px;top:16.00px" width="11.00" height="8.00" viewBox="0 0 11.00 8.00"><path d="M0 .6H7.500M0 2.700H4.200M0 4.800H3.400" stroke="#d2d2d2" stroke-width=".9"/><path d="M5.800 2.800L10.300 1.900V6.100A1.200 1.100 0 1 1 9.500 5.100V3L6.600 3.600V7A1.200 1.100 0 1 1 5.800 6Z" fill="#d2d2d2"/></svg><svg style="left:781.00px;top:15.60px" width="8.80" height="8.20" viewBox="0 0 8.80 8.20"><path d="M1.2 0V8.200" stroke="#d2d2d2" stroke-width=".7"/><rect x="0.2" y="4.2" width="2" height="2.400" rx=".4" fill="#d2d2d2"/><path d="M4.4 0V8.200" stroke="#d2d2d2" stroke-width=".7"/><rect x="3.4" y="1.6" width="2" height="2.400" rx=".4" fill="#d2d2d2"/><path d="M7.6 0V8.200" stroke="#d2d2d2" stroke-width=".7"/><rect x="6.6" y="4.8" width="2" height="2.400" rx=".4" fill="#d2d2d2"/></svg><svg style="left:825.00px;top:15.60px" width="9.40" height="8.40" viewBox="0 0 9.40 8.40"><path d="M.6 4.600L4.400 1.200 8.600.700 8.800 4.200 5 8 Z" fill="none" stroke="#d2d2d2" stroke-width=".9" stroke-linejoin="round"/><circle cx="7" cy="2.500" r=".8" fill="#d2d2d2"/><path d="M2.600 4.700L4.600 6.700M4 3.500L6 5.500" stroke="#d2d2d2" stroke-width=".7"/></svg><svg style="left:879.50px;top:15.40px" width="9.00" height="8.80" viewBox="0 0 9.00 8.80"><path d="M1 1L8 8M8 1L1 8" stroke="#d2d2d2" stroke-width="1.100" stroke-linecap="round"/><circle cx="1.600" cy="7.400" r="1.300" fill="#d2d2d2"/><circle cx="7.400" cy="7.400" r="1.300" fill="#d2d2d2"/><path d="M.3.300L2.500 1 1 2.500Z" fill="#d2d2d2"/></svg><svg style="left:932.80px;top:15.80px" width="8.80" height="8.00" viewBox="0 0 8.80 8.00"><rect x=".4" y=".4" width="8" height="4.600" rx=".6" fill="none" stroke="#8a8a8a" stroke-width=".8"/><path d="M4.400 5V6.200M2.200 7.800L4.400 6 6.600 7.800" fill="none" stroke="#8a8a8a" stroke-width=".8"/></svg><svg style="left:5.00px;top:31.20px" width="7.80" height="6.90" viewBox="0 0 7.80 6.90"><rect x=".45" y=".45" width="6.900" height="6" rx=".6" fill="none" stroke="#d2d2d2" stroke-width=".9"/><rect x=".4" y=".4" width="2.400" height="6.100" fill="#d2d2d2"/></svg><svg style="left:18.10px;top:34.00px" width="4.60" height="2.60" viewBox="0 0 4.60 2.60"><path d="M.3.300L2.30 2.30 4.30 .3" fill="none" stroke="#c8c8c8" stroke-width="0.85"/></svg><svg style="left:32.60px;top:32.40px" width="3.40" height="5.60" viewBox="0 0 3.40 5.60"><path d="M3 .3L.6 2.800 3 5.300" fill="none" stroke="#707070" stroke-width=".85"/></svg><svg style="left:43.30px;top:32.40px" width="3.40" height="5.60" viewBox="0 0 3.40 5.60"><path d="M.4.300L2.800 2.800.4 5.300" fill="none" stroke="#707070" stroke-width=".85"/></svg><svg style="left:261.00px;top:31.90px" width="8.30" height="5.40" viewBox="0 0 8.30 5.40"><rect x="0.0" y="0.0" width="2.100" height="2.100" fill="#d2d2d2"/><rect x="0.0" y="3.2" width="2.100" height="2.100" fill="#d2d2d2"/><rect x="3.1" y="0.0" width="2.100" height="2.100" fill="#d2d2d2"/><rect x="3.1" y="3.2" width="2.100" height="2.100" fill="#d2d2d2"/><rect x="6.2" y="0.0" width="2.100" height="2.100" fill="#d2d2d2"/><rect x="6.2" y="3.2" width="2.100" height="2.100" fill="#d2d2d2"/></svg><svg style="left:275.20px;top:31.90px" width="7.60" height="5.40" viewBox="0 0 7.60 5.40"><rect x="0" y="0.0" width="1.500" height="1.300" fill="#f0f0f0"/><rect x="2.300" y="0.0" width="5.300" height="1.300" fill="#f0f0f0"/><rect x="0" y="2.0" width="1.500" height="1.300" fill="#f0f0f0"/><rect x="2.300" y="2.0" width="5.300" height="1.300" fill="#f0f0f0"/><rect x="0" y="4.1" width="1.500" height="1.300" fill="#f0f0f0"/><rect x="2.300" y="4.1" width="5.300" height="1.300" fill="#f0f0f0"/></svg><svg style="left:294.20px;top:31.20px" width="7.00" height="7.20" viewBox="0 0 7.00 7.20"><circle cx="2.900" cy="2.900" r="2.300" fill="none" stroke="#d2d2d2" stroke-width=".9"/><path d="M4.600 4.700L6.600 6.900" stroke="#d2d2d2" stroke-width="1"/></svg><svg style="left:306.80px;top:33.80px" width="4.60" height="2.60" viewBox="0 0 4.60 2.60"><path d="M.3.300L2.30 2.30 4.30 .3" fill="none" stroke="#c8c8c8" stroke-width="0.85"/></svg><svg style="left:320.60px;top:34.20px" width="9.20" height="2.00" viewBox="0 0 9.20 2.00"><circle cx="1.0" cy="1" r=".95" fill="#d2d2d2"/><circle cx="4.6" cy="1" r=".95" fill="#d2d2d2"/><circle cx="8.2" cy="1" r=".95" fill="#d2d2d2"/></svg><svg style="left:358.20px;top:33.80px" width="4.60" height="2.60" viewBox="0 0 4.60 2.60"><path d="M.3.300L2.30 2.30 4.30 .3" fill="none" stroke="#c8c8c8" stroke-width="0.85"/></svg><svg style="left:533.20px;top:33.80px" width="4.60" height="2.60" viewBox="0 0 4.60 2.60"><path d="M.3.300L2.30 2.30 4.30 .3" fill="none" stroke="#c8c8c8" stroke-width="0.85"/></svg><svg style="left:666.20px;top:33.80px" width="4.60" height="2.60" viewBox="0 0 4.60 2.60"><path d="M.3.300L2.30 2.30 4.30 .3" fill="none" stroke="#c8c8c8" stroke-width="0.85"/></svg><svg style="left:822.00px;top:33.80px" width="4.60" height="2.60" viewBox="0 0 4.60 2.60"><path d="M.3.300L2.30 2.30 4.30 .3" fill="none" stroke="#c8c8c8" stroke-width="0.85"/></svg><svg style="left:628.80px;top:34.20px" width="9.20" height="2.00" viewBox="0 0 9.20 2.00"><circle cx="1.0" cy="1" r=".95" fill="#d2d2d2"/><circle cx="4.6" cy="1" r=".95" fill="#d2d2d2"/><circle cx="8.2" cy="1" r=".95" fill="#d2d2d2"/></svg><svg style="left:936.30px;top:34.20px" width="9.20" height="2.00" viewBox="0 0 9.20 2.00"><circle cx="1.0" cy="1" r=".95" fill="#d2d2d2"/><circle cx="4.6" cy="1" r=".95" fill="#d2d2d2"/><circle cx="8.2" cy="1" r=".95" fill="#d2d2d2"/></svg><div class="a" style="left:414px;top:34.6px;width:1px;height:1px;background:#6a6a6a;"></div><div class="a" style="left:722px;top:34.6px;width:1px;height:1px;background:#6a6a6a;"></div><svg style="left:904.80px;top:30.90px" width="9.20" height="8.80" viewBox="0 0 9.20 8.80"><circle cx="4.600" cy="4.400" r="3.100" fill="none" stroke="#d8d8d8" stroke-width=".7"/><circle cx="4.600" cy="1.300" r="1.300" fill="#e8504a"/><circle cx="7.500" cy="3.400" r="1.300" fill="#b04ad8"/><circle cx="6.500" cy="6.900" r="1.300" fill="#4a8ae8"/><circle cx="2.600" cy="6.900" r="1.300" fill="#e8d040"/><circle cx="1.700" cy="3.400" r="1.300" fill="#e89030"/><circle cx="4.600" cy="4.400" r="1" fill="#d8d8d8"/></svg><svg style="left:921.00px;top:32.30px" width="9.00" height="5.30" viewBox="0 0 9.00 5.30"><rect x=".5" y=".5" width="8" height="4.300" rx=".5" fill="none" stroke="#dcdcdc" stroke-width="1"/></svg><svg style="left:797.00px;top:1.20px" width="9.00" height="8.60" viewBox="0 0 9.00 8.60"><path d="M2 1L7.500 2.500 6 8 .5 6.500Z" fill="#8aa6c8" stroke="#4a6a8a" stroke-width=".5"/><path d="M3 3L6.500 4M2.600 4.500L6 5.500" stroke="#e8eef4" stroke-width=".6"/></svg><svg style="left:812.00px;top:1.80px" width="8.40" height="6.60" viewBox="0 0 8.40 6.60"><path d="M.4 2.400Q4.200-.9 8 2.400M1.700 3.900Q4.200 1.700 6.700 3.900M3 5.300Q4.200 4.300 5.400 5.300" fill="none" stroke="#3a5e74" stroke-width=".8"/><circle cx="4.200" cy="6.100" r=".6" fill="#3a5e74"/></svg><svg style="left:825.50px;top:1.80px" width="8.60" height="6.80" viewBox="0 0 8.60 6.80"><rect x=".4" y=".4" width="7.800" height="6" rx=".6" fill="none" stroke="#3a5e74" stroke-width=".8"/><rect x="1.500" y="2.600" width="2.200" height="2.800" fill="#3a5e74"/><rect x="4.500" y="2.600" width="2.600" height="2.800" fill="#7f99ab"/><rect x=".8" y=".8" width="7" height="1" fill="#3a5e74"/></svg><svg style="left:842.20px;top:1.60px" width="9.60" height="7.40" viewBox="0 0 9.60 7.40"><path d="M2.200 5.200H.8Q.4 5.200 .4 4.800V.8Q.4.400.8.400H8.800Q9.200.400 9.200.800V4.800Q9.200 5.200 8.800 5.200H7.400" fill="none" stroke="#3a5e74" stroke-width=".8"/><path d="M4.800 3.600L7.400 7.200H2.200Z" fill="#3a5e74"/></svg><svg style="left:857.50px;top:1.60px" width="10.50" height="7.00" viewBox="0 0 10.50 7.00"><path d="M.3 2.500H1.800L3.800.600V6.400L1.800 4.500H.3Z" fill="#9fb2c0"/><path d="M5 2.300Q5.800 3.500 5 4.700M6.400 1.400Q7.800 3.500 6.400 5.600M7.800.600Q9.800 3.500 7.800 6.400" fill="none" stroke="#a9bac6" stroke-width=".7"/></svg><svg style="left:915.00px;top:1.80px" width="7.20" height="7.20" viewBox="0 0 7.20 7.20"><circle cx="2.900" cy="2.900" r="2.300" fill="none" stroke="#3a5e74" stroke-width=".9"/><path d="M4.600 4.700L6.800 6.900" stroke="#3a5e74" stroke-width="1"/></svg><svg style="left:929.00px;top:2.40px" width="9.60" height="5.60" viewBox="0 0 9.60 5.60"><circle cx=".6" cy="0.4" r=".55" fill="#3a5e74"/><rect x="2" y="0.0" width="7.500" height=".8" fill="#3a5e74"/><circle cx=".6" cy="2.7" r=".55" fill="#3a5e74"/><rect x="2" y="2.3" width="7.500" height=".8" fill="#3a5e74"/><circle cx=".6" cy="5.0" r=".55" fill="#3a5e74"/><rect x="2" y="4.6" width="7.500" height=".8" fill="#3a5e74"/></svg><svg style="left:22.70px;top:517.80px" width="9.20" height="8.80" viewBox="0 0 9.20 8.80"><circle cx="4.400" cy="2.200" r="2.100" fill="#f2f2f2"/><circle cx="2.200" cy="6.600" r="2.100" fill="#f2f2f2"/><circle cx="6.800" cy="6.600" r="2.100" fill="#f2f2f2"/></svg><svg style="left:293.20px;top:515.00px" width="9.00" height="6.60" viewBox="0 0 9.00 6.60"><rect x=".45" y=".45" width="8.100" height="5.700" rx=".8" fill="none" stroke="#c4c4c4" stroke-width=".9"/><rect x="1.700" y="2.600" width="5.600" height="2.400" fill="#c4c4c4"/><rect x="1.700" y="1.400" width="2" height=".6" fill="#c4c4c4"/></svg><svg style="left:350.60px;top:514.60px" width="12.40" height="7.00" viewBox="0 0 12.40 7.00"><path d="M4.200 1.200H11.600L10.400 5.800H3Z" fill="none" stroke="#c4c4c4" stroke-width=".8"/><path d="M7.900 1.200L6.700 5.800" stroke="#c4c4c4" stroke-width=".8"/><path d="M.2 2.200H3.200M.8 3.600H3M0 5H2.600" stroke="#c4c4c4" stroke-width=".7"/><path d="M5 2.600L5.900 3.500 5 4.400M9.400 2.600L8.600 3.500 9.400 4.400" fill="none" stroke="#c4c4c4" stroke-width=".6"/></svg><svg style="left:410.40px;top:513.20px" width="12.00" height="9.80" viewBox="0 0 12.00 9.80"><rect x=".2" y="2.700" width="10.600" height="1.300" rx=".5" fill="#4a9af0"/><rect x="2.600" y="4.600" width="7.600" height="1.300" rx=".5" fill="#4a9af0"/><rect x="0" y="6.600" width="11.600" height="1.300" rx=".5" fill="#3fc24f"/><rect x="5.550" y=".6" width=".9" height="9.200" fill="#f0502a"/><circle cx="6" cy=".9" r=".9" fill="#f0502a"/></svg><svg style="left:470.40px;top:514.00px" width="9.40" height="8.40" viewBox="0 0 9.40 8.40"><path d="M1 8L5.800 2.800" stroke="#c4c4c4" stroke-width="1.500" stroke-linecap="round"/><path d="M6.600 0L7.200 1.600 8.800 2.200 7.200 2.800 6.600 4.400 6 2.800 4.400 2.200 6 1.600Z" fill="#c4c4c4"/><path d="M2.600.800V2M2 1.400H3.200M8.600 4.800V6M8 5.400H9.200" stroke="#c4c4c4" stroke-width=".6"/></svg><svg style="left:529.80px;top:513.50px" width="8.40" height="8.40" viewBox="0 0 8.40 8.40"><circle cx="4.200" cy="4.200" r="1" fill="#c4c4c4"/><circle cx="7.60" cy="4.20" r=".75" fill="#c4c4c4"/><circle cx="6.60" cy="6.60" r=".75" fill="#c4c4c4"/><circle cx="4.20" cy="7.60" r=".75" fill="#c4c4c4"/><circle cx="1.80" cy="6.60" r=".75" fill="#c4c4c4"/><circle cx="0.80" cy="4.20" r=".75" fill="#c4c4c4"/><circle cx="1.80" cy="1.80" r=".75" fill="#c4c4c4"/><circle cx="4.20" cy="0.80" r=".75" fill="#c4c4c4"/><circle cx="6.60" cy="1.80" r=".75" fill="#c4c4c4"/></svg><svg style="left:590.60px;top:514.40px" width="6.80" height="7.60" viewBox="0 0 6.80 7.60"><path d="M2 1.400L6.400.300V5.400A1.300 1.100 0 1 1 5.500 4.300V1.900L2.900 2.550V6.500A1.300 1.100 0 1 1 2 5.400Z" fill="#c4c4c4"/></svg><svg style="left:648.60px;top:513.80px" width="9.00" height="8.60" viewBox="0 0 9.00 8.60"><path d="M8.600.300Q5.200.300 3.400 3.200L2.600 4.600 4.400 6.400 5.800 5.600Q8.700 3.800 8.600.300Z" fill="none" stroke="#c4c4c4" stroke-width=".8"/><circle cx="6.200" cy="2.800" r=".8" fill="#c4c4c4"/><path d="M3 3.400L1 3.600 .2 4.800 2.400 4.800M5.600 6L5.400 8 4.200 8.800 4.200 6.600M2.400 6.600L.8 8.200" fill="none" stroke="#c4c4c4" stroke-width=".7"/></svg><svg style="left:905.00px;top:518.80px" width="7.60" height="7.20" viewBox="0 0 7.60 7.20"><path d="M3.800 0L7.600 3.600H6.500V7.200H4.700V4.700H2.900V7.200H1.100V3.600H0Z" fill="#cfcfcf"/></svg><svg style="left:929.20px;top:518.60px" width="7.80" height="7.60" viewBox="0 0 7.80 7.60"><rect x="3.250" y="-.1" width="1.300" height="2" fill="#cfcfcf" transform="rotate(0 3.900 3.800)"/><rect x="3.250" y="-.1" width="1.300" height="2" fill="#cfcfcf" transform="rotate(45 3.900 3.800)"/><rect x="3.250" y="-.1" width="1.300" height="2" fill="#cfcfcf" transform="rotate(90 3.900 3.800)"/><rect x="3.250" y="-.1" width="1.300" height="2" fill="#cfcfcf" transform="rotate(135 3.900 3.800)"/><rect x="3.250" y="-.1" width="1.300" height="2" fill="#cfcfcf" transform="rotate(180 3.900 3.800)"/><rect x="3.250" y="-.1" width="1.300" height="2" fill="#cfcfcf" transform="rotate(225 3.900 3.800)"/><rect x="3.250" y="-.1" width="1.300" height="2" fill="#cfcfcf" transform="rotate(270 3.900 3.800)"/><rect x="3.250" y="-.1" width="1.300" height="2" fill="#cfcfcf" transform="rotate(315 3.900 3.800)"/><circle cx="3.900" cy="3.800" r="2.500" fill="#cfcfcf"/><circle cx="3.900" cy="3.800" r="1.200" fill="#1c1c1c"/></svg><svg style="left:4.50px;top:46.00px" width="4.80" height="3.20" viewBox="0 0 4.80 3.20"><path d="M.4.400L2.400 2.600 4.400.400" fill="none" stroke="#e8e8e8" stroke-width="1"/></svg><svg style="left:6.00px;top:163.60px" width="2.80" height="5.00" viewBox="0 0 2.80 5.00"><path d="M.4.400L2.300 2.500.4 4.600" fill="none" stroke="#b8b8b8" stroke-width=".8"/></svg>
</div></div>
</body></html>
